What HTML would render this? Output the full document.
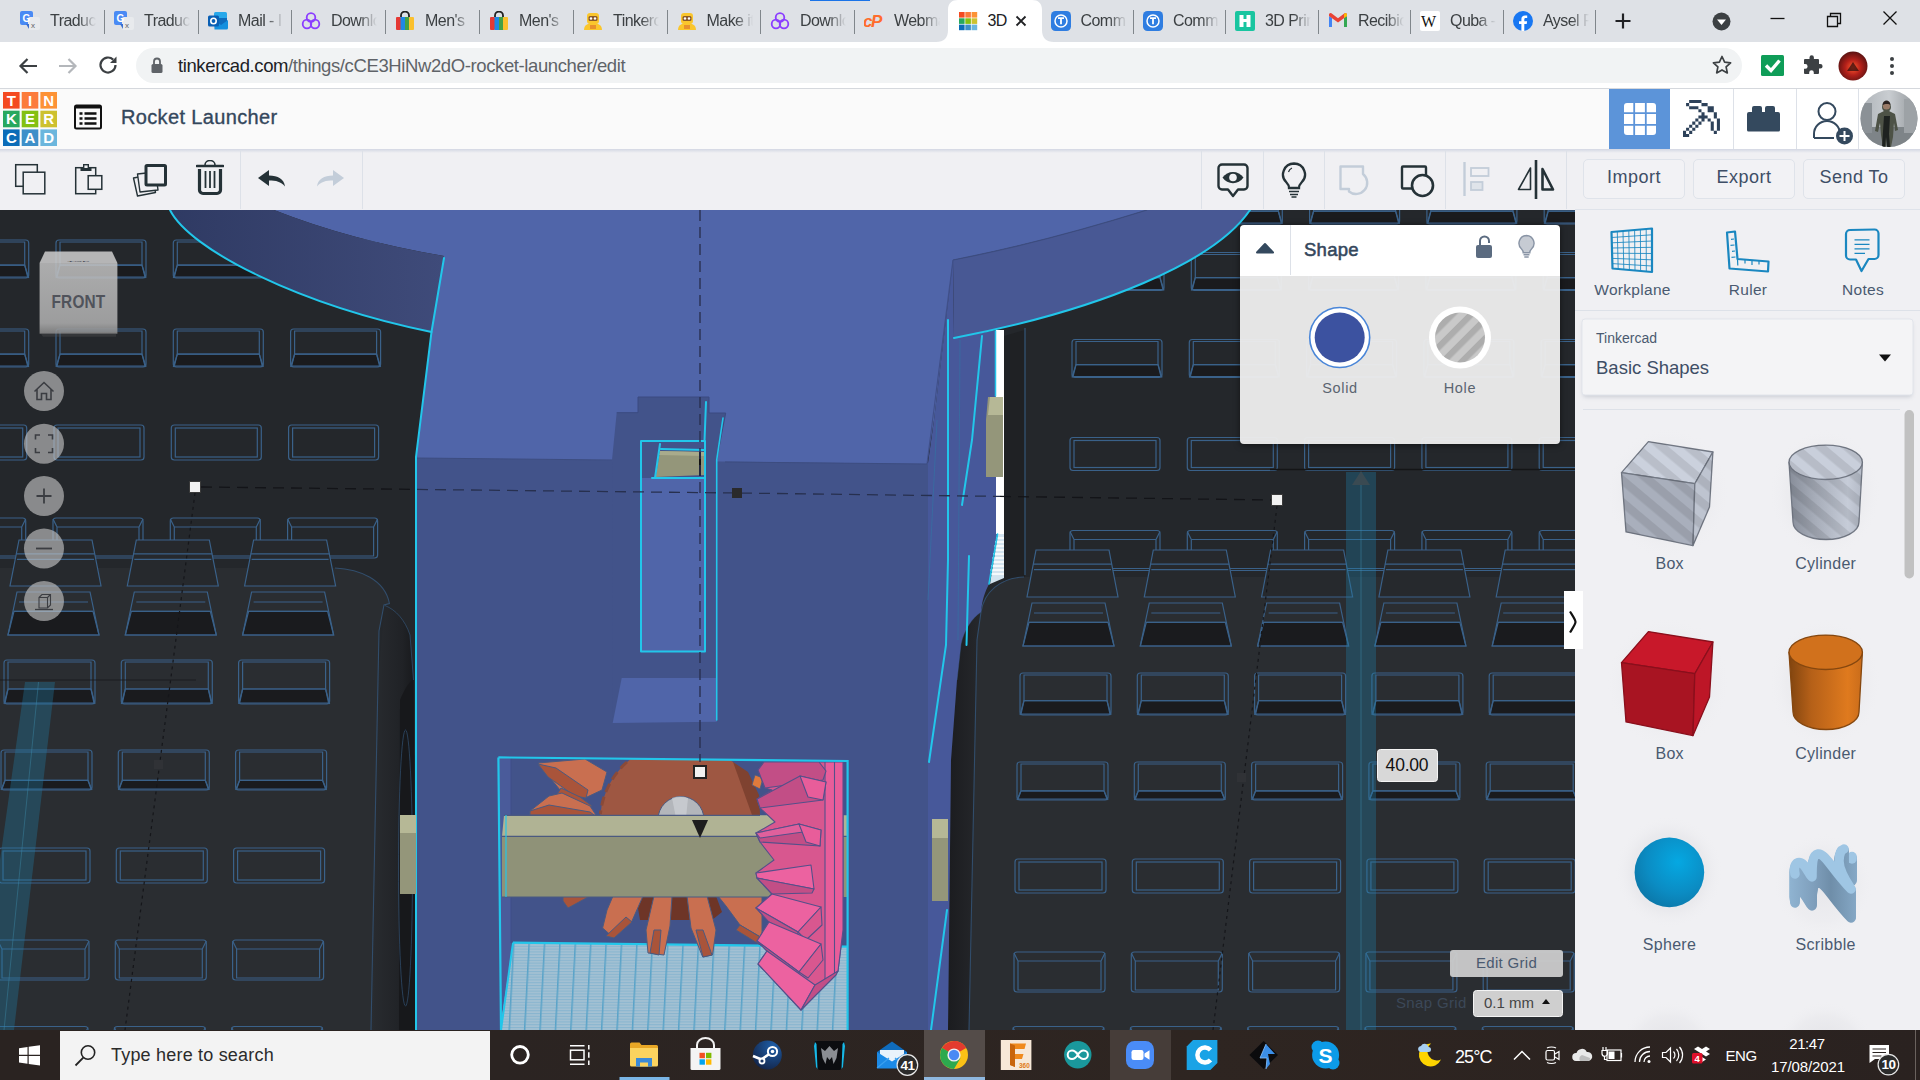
<!DOCTYPE html>
<html lang="en">
<head>
<meta charset="utf-8">
<title>3D design Rocket Launcher | Tinkercad</title>
<style>
*{box-sizing:border-box;margin:0;padding:0}
html,body{width:1920px;height:1080px;overflow:hidden;background:#fff;font-family:"Liberation Sans",sans-serif}
.abs{position:absolute}
#tabs{position:absolute;left:0;top:0;width:1920px;height:42px;background:#dee1e6;overflow:hidden}
.tab{position:absolute;top:0;height:42px;font-size:16px;letter-spacing:-.55px;color:#3c4043;line-height:41px;white-space:nowrap;overflow:hidden}
.sep{position:absolute;top:10px;width:1px;height:24px;background:#80868b}
#addr{position:absolute;left:0;top:42px;width:1920px;height:47px;background:#fff;border-bottom:1px solid #d5d8dd}
#pill{position:absolute;left:136px;top:6px;width:1606px;height:35px;border-radius:18px;background:#f1f3f4}
#url{position:absolute;left:42px;top:0;line-height:35px;font-size:18.5px;color:#5f6368;letter-spacing:-0.39px;white-space:nowrap}
#url b{font-weight:normal;color:#202124}
#hdr{position:absolute;left:0;top:89px;width:1920px;height:60px;background:#fafafa}
#hdrshadow{position:absolute;left:0;top:149px;width:1920px;height:4px;background:linear-gradient(#d3d7e3,#f0f0f3)}
#tb{position:absolute;left:0;top:149px;width:1920px;height:61px;background:#f0f0f3}
.vsep{position:absolute;top:150px;width:1px;height:59px;background:#dde1e8}
.btn{position:absolute;top:159px;height:40px;border:1px solid #dfe3ea;border-radius:5px;background:#f2f2f5;color:#3e4e66;font-size:18px;text-align:center;line-height:34px;letter-spacing:.5px}
#title{position:absolute;left:121px;top:104px;font-size:20px;color:#34475c;-webkit-text-stroke:.35px #34475c;letter-spacing:.35px;line-height:26px;white-space:nowrap}
#vp{position:absolute;left:0;top:210px;width:1575px;height:820px;background:#25282c;overflow:hidden}
#side{position:absolute;left:1575px;top:209px;width:345px;height:821px;background:#f0f0f3;border-top:1px solid #dfe3ea;overflow:hidden}
.lbl{position:absolute;font-size:15.5px;color:#4a5a70;text-align:center;width:140px;letter-spacing:.5px;white-space:nowrap}
#task{position:absolute;left:0;top:1030px;width:1920px;height:50px;background:#2a2321;overflow:hidden}
#search{position:absolute;left:60px;top:1px;width:430px;height:49px;background:#f3f3f3}
#search span{position:absolute;left:51px;top:0;line-height:48px;font-size:18px;color:#2b2b2b;white-space:nowrap;letter-spacing:.2px}
.tray{position:absolute;color:#fff;font-size:15px;white-space:nowrap}
</style>
</head>
<body>
<!-- ===== Chrome tab strip ===== -->
<div id="tabs"><svg class="abs" style="left:936px;top:0" width="118" height="42" viewBox="0 0 118 42"><path d="M0,42C8,42 12,38 12,30V10C12,3 16,0 22,0H96C102,0 106,3 106,10V30C106,38 110,42 118,42Z" fill="#fff"/></svg>
<svg class="abs" style="left:20.0px;top:11px" width="20" height="20" viewBox="0 0 20 20"><rect x="0" y="0" width="13" height="14" rx="2" fill="#4a8af4"/><rect x="8" y="6" width="12" height="13" rx="2" fill="#e8eaed"/><path d="M6,13l3,5v-5z" fill="#3a6fd0"/><text x="2.500" y="11" font-size="10" font-weight="bold" fill="#fff" font-family="Liberation Sans,sans-serif">G</text><text x="11" y="17" font-size="8" fill="#5f6368" font-family="Liberation Sans,sans-serif">x</text></svg>
<div class="tab" style="left:50.0px;width:47px;color:#3c4043;-webkit-mask-image:linear-gradient(90deg,#000 60%,transparent 98%);mask-image:linear-gradient(90deg,#000 60%,transparent 98%);">Traduc</div>
<div class="sep" style="left:104.0px"></div>
<svg class="abs" style="left:114.0px;top:11px" width="20" height="20" viewBox="0 0 20 20"><rect x="0" y="0" width="13" height="14" rx="2" fill="#4a8af4"/><rect x="8" y="6" width="12" height="13" rx="2" fill="#e8eaed"/><path d="M6,13l3,5v-5z" fill="#3a6fd0"/><text x="2.500" y="11" font-size="10" font-weight="bold" fill="#fff" font-family="Liberation Sans,sans-serif">G</text><text x="11" y="17" font-size="8" fill="#5f6368" font-family="Liberation Sans,sans-serif">x</text></svg>
<div class="tab" style="left:144.0px;width:47px;color:#3c4043;-webkit-mask-image:linear-gradient(90deg,#000 60%,transparent 98%);mask-image:linear-gradient(90deg,#000 60%,transparent 98%);">Traduc</div>
<div class="sep" style="left:198.0px"></div>
<svg class="abs" style="left:208.0px;top:11px" width="20" height="20" viewBox="0 0 20 20"><rect x="6" y="1" width="13" height="13" rx="1.500" fill="#28a8ea"/><rect x="6" y="7" width="13" height="7" fill="#0f6cbd"/><path d="M6,9l7,5l7,-5v8a1.500,1.500 0 0 1 -1.500,1.500h-12z" fill="#1490df"/><rect x="0" y="4.500" width="11" height="11" rx="1.500" fill="#0a5fb4"/><circle cx="5.500" cy="10" r="2.700" fill="none" stroke="#fff" stroke-width="1.600"/></svg>
<div class="tab" style="left:238.0px;width:47px;color:#3c4043;-webkit-mask-image:linear-gradient(90deg,#000 60%,transparent 98%);mask-image:linear-gradient(90deg,#000 60%,transparent 98%);">Mail - I</div>
<div class="sep" style="left:291.0px"></div>
<svg class="abs" style="left:301.0px;top:11px" width="20" height="20" viewBox="0 0 20 20"><g fill="none" stroke="#8b3dff" stroke-width="1.800"><circle cx="10" cy="6.500" r="4.300"/><circle cx="6" cy="13" r="4.300"/><circle cx="14" cy="13" r="4.300"/></g></svg>
<div class="tab" style="left:331.0px;width:47px;color:#3c4043;-webkit-mask-image:linear-gradient(90deg,#000 60%,transparent 98%);mask-image:linear-gradient(90deg,#000 60%,transparent 98%);">Downlo</div>
<div class="sep" style="left:385.0px"></div>
<svg class="abs" style="left:395.0px;top:11px" width="20" height="20" viewBox="0 0 20 20"><path d="M6,6V4.500a4,4 0 0 1 8,0V6" fill="none" stroke="#222" stroke-width="1.800"/><rect x="1" y="6" width="5" height="13" rx="1" fill="#e53935"/><rect x="5.500" y="6" width="4.500" height="13" fill="#1e88e5"/><rect x="10" y="6" width="4.500" height="13" fill="#43a047"/><rect x="14" y="6" width="5" height="13" rx="1" fill="#fbc02d"/></svg>
<div class="tab" style="left:425.0px;width:47px;color:#3c4043;-webkit-mask-image:linear-gradient(90deg,#000 60%,transparent 98%);mask-image:linear-gradient(90deg,#000 60%,transparent 98%);">Men's</div>
<div class="sep" style="left:479.0px"></div>
<svg class="abs" style="left:489.0px;top:11px" width="20" height="20" viewBox="0 0 20 20"><path d="M6,6V4.500a4,4 0 0 1 8,0V6" fill="none" stroke="#222" stroke-width="1.800"/><rect x="1" y="6" width="5" height="13" rx="1" fill="#e53935"/><rect x="5.500" y="6" width="4.500" height="13" fill="#1e88e5"/><rect x="10" y="6" width="4.500" height="13" fill="#43a047"/><rect x="14" y="6" width="5" height="13" rx="1" fill="#fbc02d"/></svg>
<div class="tab" style="left:519.0px;width:47px;color:#3c4043;-webkit-mask-image:linear-gradient(90deg,#000 60%,transparent 98%);mask-image:linear-gradient(90deg,#000 60%,transparent 98%);">Men's</div>
<div class="sep" style="left:573.0px"></div>
<svg class="abs" style="left:583.0px;top:11px" width="20" height="20" viewBox="0 0 20 20"><path d="M1,19c0,-5 4,-7 9,-7s9,2 9,7z" fill="#fac62d"/><rect x="4" y="2" width="12" height="11" rx="3" fill="#fac62d"/><rect x="5.500" y="5" width="9" height="5" rx="1.500" fill="#8a5a2b"/><circle cx="8" cy="7.500" r="1.200" fill="#fff"/><circle cx="12" cy="7.500" r="1.200" fill="#fff"/><rect x="7" y="14" width="6" height="4" fill="#e8912d"/></svg>
<div class="tab" style="left:613.0px;width:47px;color:#3c4043;-webkit-mask-image:linear-gradient(90deg,#000 60%,transparent 98%);mask-image:linear-gradient(90deg,#000 60%,transparent 98%);">Tinkerc</div>
<div class="sep" style="left:666.5px"></div>
<svg class="abs" style="left:676.5px;top:11px" width="20" height="20" viewBox="0 0 20 20"><path d="M1,19c0,-5 4,-7 9,-7s9,2 9,7z" fill="#fac62d"/><rect x="4" y="2" width="12" height="11" rx="3" fill="#fac62d"/><rect x="5.500" y="5" width="9" height="5" rx="1.500" fill="#8a5a2b"/><circle cx="8" cy="7.500" r="1.200" fill="#fff"/><circle cx="12" cy="7.500" r="1.200" fill="#fff"/><rect x="7" y="14" width="6" height="4" fill="#e8912d"/></svg>
<div class="tab" style="left:706.5px;width:47px;color:#3c4043;-webkit-mask-image:linear-gradient(90deg,#000 60%,transparent 98%);mask-image:linear-gradient(90deg,#000 60%,transparent 98%);">Make it</div>
<div class="sep" style="left:760.0px"></div>
<svg class="abs" style="left:770.0px;top:11px" width="20" height="20" viewBox="0 0 20 20"><g fill="none" stroke="#8b3dff" stroke-width="1.800"><circle cx="10" cy="6.500" r="4.300"/><circle cx="6" cy="13" r="4.300"/><circle cx="14" cy="13" r="4.300"/></g></svg>
<div class="tab" style="left:800.0px;width:47px;color:#3c4043;-webkit-mask-image:linear-gradient(90deg,#000 60%,transparent 98%);mask-image:linear-gradient(90deg,#000 60%,transparent 98%);">Downlo</div>
<div class="sep" style="left:854.0px"></div>
<svg class="abs" style="left:864.0px;top:11px" width="20" height="20" viewBox="0 0 20 20"><text x="-1" y="16" font-size="17" font-weight="bold" font-style="italic" fill="#ff6c2c" font-family="Liberation Sans,sans-serif" letter-spacing="-1.500">cP</text></svg>
<div class="tab" style="left:894.0px;width:47px;color:#3c4043;-webkit-mask-image:linear-gradient(90deg,#000 60%,transparent 98%);mask-image:linear-gradient(90deg,#000 60%,transparent 98%);">Webma</div>
<svg class="abs" style="left:957.5px;top:11px" width="20" height="20" viewBox="0 0 20 20"><rect x="1.0" y="1.0" width="5.600" height="5.600" fill="#f44a21"/><rect x="7.3" y="1.0" width="5.600" height="5.600" fill="#fc7b3b"/><rect x="13.6" y="1.0" width="5.600" height="5.600" fill="#fd9235"/><rect x="1.0" y="7.3" width="5.600" height="5.600" fill="#27a85f"/><rect x="7.3" y="7.3" width="5.600" height="5.600" fill="#84c012"/><rect x="13.6" y="7.3" width="5.600" height="5.600" fill="#cdc12f"/><rect x="1.0" y="13.6" width="5.600" height="5.600" fill="#0b6cb8"/><rect x="7.3" y="13.6" width="5.600" height="5.600" fill="#3d8fc9"/><rect x="13.6" y="13.6" width="5.600" height="5.600" fill="#6bb6dd"/></svg>
<div class="tab" style="left:987.5px;width:30px;color:#202124;">3D</div>
<svg class="abs" style="left:1050.5px;top:11px" width="20" height="20" viewBox="0 0 20 20"><rect x="0" y="0" width="20" height="20" rx="4.500" fill="#2f7de1"/><circle cx="10" cy="10" r="6" fill="none" stroke="#fff" stroke-width="1.500"/><path d="M7,7.200h6M10,7.200v6" stroke="#fff" stroke-width="1.800" fill="none"/></svg>
<div class="tab" style="left:1080.5px;width:47px;color:#3c4043;-webkit-mask-image:linear-gradient(90deg,#000 60%,transparent 98%);mask-image:linear-gradient(90deg,#000 60%,transparent 98%);">Comm</div>
<div class="sep" style="left:1133.0px"></div>
<svg class="abs" style="left:1143.0px;top:11px" width="20" height="20" viewBox="0 0 20 20"><rect x="0" y="0" width="20" height="20" rx="4.500" fill="#2f7de1"/><circle cx="10" cy="10" r="6" fill="none" stroke="#fff" stroke-width="1.500"/><path d="M7,7.200h6M10,7.200v6" stroke="#fff" stroke-width="1.800" fill="none"/></svg>
<div class="tab" style="left:1173.0px;width:47px;color:#3c4043;-webkit-mask-image:linear-gradient(90deg,#000 60%,transparent 98%);mask-image:linear-gradient(90deg,#000 60%,transparent 98%);">Comm</div>
<div class="sep" style="left:1225.0px"></div>
<svg class="abs" style="left:1235.0px;top:11px" width="20" height="20" viewBox="0 0 20 20"><rect x="0" y="0" width="20" height="20" rx="2" fill="#19c5a0"/><path d="M4.500,4v12h4v-5h3v5h4V4h-4v4h-3V4z" fill="#fff"/></svg>
<div class="tab" style="left:1265.0px;width:47px;color:#3c4043;-webkit-mask-image:linear-gradient(90deg,#000 60%,transparent 98%);mask-image:linear-gradient(90deg,#000 60%,transparent 98%);">3D Prin</div>
<div class="sep" style="left:1318.0px"></div>
<svg class="abs" style="left:1328.0px;top:11px" width="20" height="20" viewBox="0 0 20 20"><path d="M1,16V5l3,2v9z" fill="#4285f4"/><path d="M19,16V5l-3,2v9z" fill="#34a853"/><path d="M1,5l9,6.500L19,5V3.500a1.500,1.500 0 0 0 -2.400,-1.200L10,7.300L3.400,2.300A1.500,1.500 0 0 0 1,3.500z" fill="#ea4335"/><path d="M16,7l3,-2v-1.500a1.500,1.500 0 0 0 -3,0z" fill="#fbbc04"/></svg>
<div class="tab" style="left:1358.0px;width:47px;color:#3c4043;-webkit-mask-image:linear-gradient(90deg,#000 60%,transparent 98%);mask-image:linear-gradient(90deg,#000 60%,transparent 98%);">Recibic</div>
<div class="sep" style="left:1410.0px"></div>
<svg class="abs" style="left:1420.0px;top:11px" width="20" height="20" viewBox="0 0 20 20"><rect x="0" y="0" width="20" height="20" rx="2" fill="#fff"/><text x="1" y="16" font-size="16" fill="#111" font-family="Liberation Serif,serif">W</text></svg>
<div class="tab" style="left:1450.0px;width:47px;color:#3c4043;-webkit-mask-image:linear-gradient(90deg,#000 60%,transparent 98%);mask-image:linear-gradient(90deg,#000 60%,transparent 98%);">Quba -</div>
<div class="sep" style="left:1503.0px"></div>
<svg class="abs" style="left:1513.0px;top:11px" width="20" height="20" viewBox="0 0 20 20"><circle cx="10" cy="10" r="10" fill="#1877f2"/><path d="M11.300,20v-7h2.400l.4,-2.800h-2.800V8.400c0,-.8 .3,-1.400 1.500,-1.400h1.400V4.500c-.3,0 -1.200,-.1 -2.200,-.1c-2.200,0 -3.600,1.300 -3.600,3.700v2.100H6v2.800h2.400v7z" fill="#fff"/></svg>
<div class="tab" style="left:1543.0px;width:47px;color:#3c4043;-webkit-mask-image:linear-gradient(90deg,#000 60%,transparent 98%);mask-image:linear-gradient(90deg,#000 60%,transparent 98%);">Aysel F</div>
<div class="sep" style="left:1595.0px"></div>
<svg class="abs" style="left:1014px;top:14px" width="14" height="14" viewBox="0 0 14 14"><path d="M2.500,2.500L11.500,11.500M11.500,2.500L2.500,11.500" stroke="#202124" stroke-width="1.800"/></svg>
<svg class="abs" style="left:1614px;top:12px" width="18" height="18" viewBox="0 0 18 18"><path d="M9,1.500V16.500M1.500,9H16.500" stroke="#202124" stroke-width="2.200"/></svg>
<svg class="abs" style="left:1712px;top:12px" width="19" height="19" viewBox="0 0 19 19"><circle cx="9.500" cy="9.500" r="9" fill="#3c4043"/><path d="M5,7.500H14L9.500,13Z" fill="#fff"/></svg>
<svg class="abs" style="left:1760px;top:0" width="160" height="42" viewBox="0 0 160 42"><path d="M10.500,18.500H24.500" stroke="#111" stroke-width="1.300"/><path d="M67.500,16.500h10v10h-10zM70.500,16.500v-3h10v10h-3" stroke="#111" stroke-width="1.300" fill="none"/><path d="M123.500,11.500L136.500,24.500M136.500,11.500L123.500,24.500" stroke="#111" stroke-width="1.300"/></svg>
<div class="abs" style="left:810px;top:0;width:60px;height:1px;background:#1a73e8"></div></div>
<!-- ===== Address bar ===== -->
<div id="addr">
  <div id="pill"><div id="url"><b>tinkercad.com</b>/things/cCE3HiNw2dO-rocket-launcher/edit</div></div>
<svg class="abs" style="left:16px;top:12px" width="24" height="24" viewBox="0 0 24 24"><path d="M21,12H4.500M11.500,5L4.500,12L11.500,19" stroke="#3c4043" stroke-width="2.200" fill="none"/></svg>
<svg class="abs" style="left:56px;top:12px" width="24" height="24" viewBox="0 0 24 24"><path d="M3,12H19.500M12.500,5L19.500,12L12.500,19" stroke="#b4b7bb" stroke-width="2.200" fill="none"/></svg>
<svg class="abs" style="left:96px;top:11px" width="24" height="24" viewBox="0 0 24 24"><path d="M19.500,12a7.500,7.500 0 1 1 -2.300,-5.400" stroke="#3c4043" stroke-width="2.200" fill="none"/><path d="M20.500,3.500V10H14Z" fill="#3c4043"/></svg>
<svg class="abs" style="left:150px;top:15px" width="14" height="17" viewBox="0 0 14 17"><rect x="1.500" y="7" width="11" height="9" rx="1.500" fill="#5f6368"/><path d="M4,7V4.500a3,3 0 0 1 6,0V7" stroke="#5f6368" stroke-width="1.800" fill="none"/></svg>
<svg class="abs" style="left:1711px;top:12px" width="22" height="22" viewBox="0 0 22 22"><path d="M11,2.500l2.600,5.600l6,.7l-4.500,4.100l1.200,6l-5.300,-3l-5.300,3l1.200,-6l-4.500,-4.100l6,-.7z" stroke="#3c4043" stroke-width="1.700" fill="none" stroke-linejoin="round"/></svg>
<svg class="abs" style="left:1761px;top:13px" width="23" height="21" viewBox="0 0 23 21"><rect width="23" height="21" rx="1.500" fill="#0f9d58"/><path d="M5,10.500l5,5l8.500,-10" stroke="#fff" stroke-width="3.400" fill="none"/></svg>
<svg class="abs" style="left:1801px;top:12px" width="22" height="22" viewBox="0 0 22 22"><path d="M8.500,3.500a2.200,2.200 0 0 1 4.400,0V5H17a1,1 0 0 1 1,1v4h1.300a2.300,2.300 0 0 1 0,4.600H18V19a1,1 0 0 1 -1,1h-4.200v-1.400a2.300,2.300 0 0 0 -4.600,0V20H4a1,1 0 0 1 -1,-1v-4.300h1.300a2.300,2.300 0 0 0 0,-4.600H3V6a1,1 0 0 1 1,-1h4.500z" fill="#3c4043"/></svg>
<svg class="abs" style="left:1838px;top:9px" width="30" height="30" viewBox="0 0 30 30"><defs><radialGradient id="av1" cx=".5" cy=".55" r=".6"><stop offset="0" stop-color="#ff5a2e"/><stop offset=".45" stop-color="#b3201a"/><stop offset="1" stop-color="#4a1010"/></radialGradient></defs><circle cx="15" cy="15" r="14.500" fill="url(#av1)"/><path d="M9,20l6,-9l6,9z" fill="#2a0c0c" opacity=".7"/></svg>
<svg class="abs" style="left:1888px;top:14px" width="8" height="20" viewBox="0 0 8 20"><circle cx="4" cy="3" r="2" fill="#3c4043"/><circle cx="4" cy="10" r="2" fill="#3c4043"/><circle cx="4" cy="17" r="2" fill="#3c4043"/></svg>
</div>
<!-- ===== Tinkercad header ===== -->
<div id="hdr"></div>
<div id="tb"></div>
<div id="hdrshadow"></div>
<div id="title">Rocket Launcher</div>
<!-- Tinkercad logo -->
<svg class="abs" style="left:3px;top:92px" width="54" height="54" viewBox="0 0 54 54">
<g font-family="Liberation Sans,sans-serif" font-weight="bold" font-size="15" fill="#fff" text-anchor="middle">
<rect x="0" y="0" width="16.600" height="16.600" fill="#f44a21"/><text x="8.300" y="13.700">T</text>
<rect x="18.700" y="0" width="16.600" height="16.600" fill="#fc7b3b"/><text x="27" y="13.700">I</text>
<rect x="37.400" y="0" width="16.600" height="16.600" fill="#fd9235"/><text x="45.700" y="13.700">N</text>
<rect x="0" y="18.700" width="16.600" height="16.600" fill="#27a85f"/><text x="8.300" y="32.400">K</text>
<rect x="18.700" y="18.700" width="16.600" height="16.600" fill="#84c012"/><text x="27" y="32.400">E</text>
<rect x="37.400" y="18.700" width="16.600" height="16.600" fill="#cdc12f"/><text x="45.700" y="32.400">R</text>
<rect x="0" y="37.400" width="16.600" height="16.600" fill="#0b6cb8"/><text x="8.300" y="51.100">C</text>
<rect x="18.700" y="37.400" width="16.600" height="16.600" fill="#3d8fc9"/><text x="27" y="51.100">A</text>
<rect x="37.400" y="37.400" width="16.600" height="16.600" fill="#6bb6dd"/><text x="45.700" y="51.100">D</text>
</g></svg>
<!-- list icon -->
<svg class="abs" style="left:74px;top:104px" width="28" height="26" viewBox="0 0 28 26">
<rect x="1" y="1.500" width="26" height="23" rx="1.500" fill="none" stroke="#111" stroke-width="2"/>
<rect x="1" y="1" width="26" height="3.500" fill="#111"/>
<path d="M5.500,9.500h3M10.500,9.500h12M5.500,14.500h3M10.500,14.500h12M5.500,19.500h3M10.500,19.500h12" stroke="#111" stroke-width="2.400"/>
</svg>
<!-- right header buttons -->
<div class="abs" style="left:1670px;top:89px;width:250px;height:60px;background:#fff"></div>
<div class="abs" style="left:1609px;top:89px;width:61px;height:60px;background:#5c94d9"></div>
<svg class="abs" style="left:1623.500px;top:103px" width="32" height="32" viewBox="0 0 32 32">
<rect x="0" y="0" width="32" height="32" rx="3" fill="#fff"/>
<path d="M10.200,0V32M21.800,0V32M0,10.200H32M0,21.800H32" stroke="#5c94d9" stroke-width="1.800"/>
</svg>
<div class="abs" style="left:1733px;top:89px;width:1px;height:60px;background:#dde1e8"></div>
<div class="abs" style="left:1795.500px;top:89px;width:1px;height:60px;background:#dde1e8"></div>
<div class="abs" style="left:1858px;top:89px;width:1px;height:60px;background:#dde1e8"></div>
<!-- pickaxe (pixel style) -->
<svg class="abs" style="left:1683.400px;top:100px" width="37" height="37" viewBox="0 0 37 37"><path d="M6.16,0.00h3.08v3.08h-3.08zM9.24,0.00h3.08v3.08h-3.08zM12.32,0.00h3.08v3.08h-3.08zM15.40,0.00h3.08v3.08h-3.08zM3.08,3.08h3.08v3.08h-3.08zM18.48,3.08h3.08v3.08h-3.08zM21.56,3.08h3.08v3.08h-3.08zM6.16,6.16h3.08v3.08h-3.08zM9.24,6.16h3.08v3.08h-3.08zM12.32,6.16h3.08v3.08h-3.08zM24.64,6.16h3.08v3.08h-3.08zM27.72,6.16h3.08v3.08h-3.08zM15.40,9.24h3.08v3.08h-3.08zM24.64,9.24h3.08v3.08h-3.08zM27.72,9.24h3.08v3.08h-3.08zM18.48,12.32h3.08v3.08h-3.08zM30.80,12.32h3.08v3.08h-3.08zM15.40,15.40h3.08v3.08h-3.08zM18.48,15.40h3.08v3.08h-3.08zM21.56,15.40h3.08v3.08h-3.08zM30.80,15.40h3.08v3.08h-3.08zM12.32,18.48h3.08v3.08h-3.08zM18.48,18.48h3.08v3.08h-3.08zM24.64,18.48h3.08v3.08h-3.08zM33.88,18.48h3.08v3.08h-3.08zM9.24,21.56h3.08v3.08h-3.08zM15.40,21.56h3.08v3.08h-3.08zM27.72,21.56h3.08v3.08h-3.08zM33.88,21.56h3.08v3.08h-3.08zM6.16,24.64h3.08v3.08h-3.08zM12.32,24.64h3.08v3.08h-3.08zM27.72,24.64h3.08v3.08h-3.08zM33.88,24.64h3.08v3.08h-3.08zM3.08,27.72h3.08v3.08h-3.08zM9.24,27.72h3.08v3.08h-3.08zM27.72,27.72h3.08v3.08h-3.08zM33.88,27.72h3.08v3.08h-3.08zM0.00,30.80h3.08v3.08h-3.08zM6.16,30.80h3.08v3.08h-3.08zM30.80,30.80h3.08v3.08h-3.08zM0.00,33.88h3.08v3.08h-3.08zM3.08,33.88h3.08v3.08h-3.08z" fill="#2d4159"/></svg>
<!-- lego brick -->
<svg class="abs" style="left:1747px;top:106px" width="33" height="26" viewBox="0 0 33 26">
<path d="M0,8a2,2 0 0 1 2,-2h3V2a2,2 0 0 1 2,-2h6a2,2 0 0 1 2,2v4h3V2a2,2 0 0 1 2,-2h6a2,2 0 0 1 2,2v4h3a2,2 0 0 1 2,2V24a1.500,1.500 0 0 1 -1.500,1.500h-30A1.500,1.500 0 0 1 0,24z" fill="#34495e"/>
</svg>
<!-- user plus -->
<svg class="abs" style="left:1812px;top:101px" width="44" height="46" viewBox="0 0 44 46">
<circle cx="15" cy="10.500" r="8.500" fill="none" stroke="#34495e" stroke-width="2"/>
<path d="M2,37V33a13,13 0 0 1 26,0" fill="none" stroke="#34495e" stroke-width="2"/>
<path d="M2,37H22" stroke="#34495e" stroke-width="2"/>
<circle cx="32.500" cy="35" r="8.500" fill="#34495e"/>
<path d="M32.500,30V40M27.500,35H37.500" stroke="#fff" stroke-width="2"/>
</svg>
<!-- avatar -->
<svg class="abs" style="left:1860px;top:89px" width="58" height="60" viewBox="0 0 58 60">
<defs><clipPath id="avc"><circle cx="29" cy="29.500" r="28.500"/></clipPath>
<linearGradient id="avbg" x1="0" x2="1"><stop offset="0" stop-color="#aeb3b8"/><stop offset=".5" stop-color="#c9cdd1"/><stop offset="1" stop-color="#8f9498"/></linearGradient></defs>
<g clip-path="url(#avc)">
<rect width="58" height="60" fill="url(#avbg)"/>
<rect x="0" y="38" width="58" height="22" fill="#7e8488"/>
<rect x="0" y="14" width="12" height="30" fill="#8b9196"/>
<rect x="44" y="10" width="14" height="34" fill="#9da2a6"/>
<path d="M22,18c0,-3 2,-5 4.500,-5s4.500,2 4.500,5c0,2 -1,3.500 -2,4l6,3l3,16l-3,1l-1,-8l-1,14l-2,10h-3l-1,-12l-1,12h-3l-2,-12l-1,-12l-2,9l-3,-1l3,-17l6,-3c-1,-.5 -2,-2 -2,-4z" fill="#4d5246"/>
<path d="M24,27h6l-1,18l1,13h-3l-1,-10l-1,10h-3z" fill="#1e2220"/>
<circle cx="26.500" cy="17" r="3.600" fill="#9a7b68"/>
<path d="M22.500,16c0,-3 2,-4.500 4,-4.500s4,1.500 4,4.500c-1,-1.500 -6,-1.500 -8,0z" fill="#2b2220"/>
</g></svg>

<!-- toolbar separators -->
<div class="vsep" style="left:240px"></div><div class="vsep" style="left:362px"></div>
<div class="vsep" style="left:1201px"></div><div class="vsep" style="left:1263px"></div><div class="vsep" style="left:1324px"></div><div class="vsep" style="left:1445px"></div><div class="vsep" style="left:1566px"></div>
<!-- copy -->
<svg class="abs" style="left:14px;top:163px" width="32" height="32" viewBox="0 0 32 32"><g fill="#f0f0f3" stroke="#253237" stroke-width="1.500"><rect x="1.700" y="1.700" width="21.600" height="21.600"/><rect x="9.200" y="9.200" width="21.600" height="21.600"/></g></svg>
<!-- paste -->
<svg class="abs" style="left:74px;top:163px" width="30" height="32" viewBox="0 0 30 32"><g fill="#f0f0f3" stroke="#253237" stroke-width="1.500"><rect x="1.700" y="4.700" width="20" height="26"/><rect x="14.200" y="12.700" width="13.600" height="13.600"/></g><path d="M6.500,4.500h11v3.500h-11z" fill="#253237"/><rect x="9.700" y="1.700" width="4.600" height="4" fill="#f0f0f3" stroke="#253237" stroke-width="1.400"/></svg>
<!-- duplicate -->
<svg class="abs" style="left:132px;top:163px" width="36" height="35" viewBox="0 0 36 35"><g fill="#f0f0f3" stroke="#253237" stroke-width="1.400" stroke-linejoin="round"><path d="M1.500,15l18,-3.500l4,18l-18,3.500z"/><path d="M5.500,11l18,-2l2.500,18l-18,2z"/></g><rect x="14" y="2.500" width="19.500" height="19.500" rx="1" fill="#f0f0f3" stroke="#253237" stroke-width="3"/></svg>
<!-- trash -->
<svg class="abs" style="left:196px;top:160px" width="28" height="36" viewBox="0 0 28 36"><path d="M9,5a5,4.500 0 0 1 10,0" fill="none" stroke="#253237" stroke-width="1.600"/><path d="M1,6h26" stroke="#253237" stroke-width="2.600" stroke-linecap="round"/><path d="M3.500,9V30a3.500,3.500 0 0 0 3.500,3.500h14a3.500,3.500 0 0 0 3.500,-3.500V9" fill="none" stroke="#253237" stroke-width="3.200"/><path d="M9.500,11V28M14,11V28M18.500,11V28" stroke="#253237" stroke-width="1.800"/></svg>
<!-- undo -->
<svg class="abs" style="left:257px;top:169px" width="29" height="19" viewBox="0 0 29 19"><path d="M1,9L12,1V6.500C21,6.500 27,10 28,17.500C24,12.500 19,11.500 12,11.500V17Z" fill="#253237"/></svg>
<!-- redo -->
<svg class="abs" style="left:316px;top:169px" width="29" height="19" viewBox="0 0 29 19"><path d="M28,9L17,1V6.500C8,6.500 2,10 1,17.500C5,12.500 10,11.500 17,11.500V17Z" fill="#c3cdd9"/></svg>
<!-- eye / view -->
<svg class="abs" style="left:1217px;top:163px" width="32" height="36" viewBox="0 0 32 36"><path d="M5,1.500h22a3.500,3.500 0 0 1 3.500,3.500v18a3.500,3.500 0 0 1 -3.500,3.500h-6l-5,6.500l-5,-6.500h-6a3.500,3.500 0 0 1 -3.500,-3.500v-18a3.500,3.500 0 0 1 3.500,-3.500z" fill="none" stroke="#253237" stroke-width="2.400" stroke-linejoin="round"/><path d="M5.500,14.500c5,-7.500 16,-7.500 21,0c-5,7.500 -16,7.500 -21,0z" fill="#253237"/><circle cx="16" cy="14.500" r="3.800" fill="#f0f0f3"/></svg>
<!-- bulb -->
<svg class="abs" style="left:1281px;top:162px" width="26" height="36" viewBox="0 0 26 36"><path d="M13,1.500a11,11 0 0 1 7.500,19c-1.800,1.800 -2.500,3.500 -2.500,5.500h-10c0,-2 -.7,-3.700 -2.500,-5.500a11,11 0 0 1 7.500,-19z" fill="none" stroke="#253237" stroke-width="2.300"/><path d="M8,29.500h10M9,32.500h8M10.500,35h5" stroke="#253237" stroke-width="1.600"/><path d="M7.500,10a6,6 0 0 1 3.500,-4" stroke="#253237" stroke-width="1.200" fill="none"/></svg>
<!-- group (disabled) -->
<svg class="abs" style="left:1339px;top:164px" width="34" height="34" viewBox="0 0 34 34"><path d="M1.500,2.500h22.500v7.500a11,11 0 1 1 -14,17.500v-2.500H1.500z" fill="none" stroke="#c3cdd9" stroke-width="2.400" stroke-linejoin="round"/></svg>
<!-- ungroup -->
<svg class="abs" style="left:1400px;top:164px" width="35" height="34" viewBox="0 0 35 34"><rect x="2" y="2.500" width="24" height="22" rx="1" fill="none" stroke="#253237" stroke-width="2.400"/><circle cx="22.500" cy="21.500" r="10.500" fill="#f0f0f3" stroke="#253237" stroke-width="2.600"/></svg>
<!-- align (disabled) -->
<svg class="abs" style="left:1463px;top:162px" width="28" height="34" viewBox="0 0 28 34"><path d="M1.500,0V34" stroke="#c3cdd9" stroke-width="2.400"/><rect x="8" y="6" width="17.500" height="8" fill="none" stroke="#c3cdd9" stroke-width="1.800"/><rect x="8" y="20" width="11.500" height="8" fill="#dfe4ea" stroke="#c3cdd9" stroke-width="1.800"/></svg>
<!-- mirror -->
<svg class="abs" style="left:1516px;top:160px" width="40" height="39" viewBox="0 0 40 39"><path d="M20,0V39" stroke="#253237" stroke-width="2.600"/><path d="M14.500,8V29.500H2.500Z" fill="none" stroke="#253237" stroke-width="1.600" stroke-linejoin="round"/><path d="M26.500,9V29.500H37Z" fill="none" stroke="#253237" stroke-width="2.600" stroke-linejoin="round"/></svg>
<!-- buttons -->
<div class="btn" style="left:1583px;width:102px">Import</div>
<div class="btn" style="left:1693px;width:102px">Export</div>
<div class="btn" style="left:1803px;width:102px">Send To</div>

<!-- ===== Viewport ===== -->
<div id="vp">
<svg id="scene" class="abs" style="left:0;top:0" width="1575" height="820" viewBox="0 210 1575 820">
<defs>
<linearGradient id="gbandL" x1="0" x2="1" y1="0" y2="0"><stop offset="0" stop-color="#2f3a63"/><stop offset="1" stop-color="#3f4b7a"/></linearGradient>
<linearGradient id="gwall" x1="0" x2="0" y1="0" y2="1"><stop offset="0" stop-color="#25282c"/><stop offset="1" stop-color="#27292d"/></linearGradient>
<pattern id="floor" width="15.400" height="2.800" patternUnits="userSpaceOnUse" patternTransform="translate(513 943) skewX(-3)"><rect width="15.400" height="2.800" fill="#a4c1d3"/><rect width="15.400" height="1.100" fill="#88b5cf"/><rect width="1.500" height="2.800" fill="#5aa3c8"/></pattern>
<linearGradient id="gR2" x1="0" x2="1"><stop offset="0" stop-color="#1b1c1f"/><stop offset="1" stop-color="#26282c"/></linearGradient><linearGradient id="gL2" x1="0" x2="1"><stop offset="0" stop-color="#292c30"/><stop offset=".7" stop-color="#202226"/><stop offset="1" stop-color="#17181b"/></linearGradient>
</defs>
<rect x="0" y="210" width="1575" height="820" fill="#24272b"/>
<!-- back wall blocks (right/left, upper rows) -->
<g fill="none" stroke="#3a6189" stroke-width="1.2">
<path d="M1079.0,211.1H1161.0L1164.0,223.0H1076.0Z" fill="#1a1b1e"/><rect x="1075.0" y="186.0" width="90.0" height="38.0" rx="3"/><path d="M1079.0,188.0H1161.0V211.1H1079.0ZM1079.0,211.1L1075.0,224.0M1161.0,211.1L1165.0,224.0"/><path d="M1196.3,211.1H1278.3L1281.3,223.0H1193.3Z" fill="#1a1b1e"/><rect x="1192.3" y="186.0" width="90.0" height="38.0" rx="3"/><path d="M1196.3,188.0H1278.3V211.1H1196.3ZM1196.3,211.1L1192.3,224.0M1278.3,211.1L1282.3,224.0"/><path d="M1313.6,211.1H1395.6L1398.6,223.0H1310.6Z" fill="#1a1b1e"/><rect x="1309.6" y="186.0" width="90.0" height="38.0" rx="3"/><path d="M1313.6,188.0H1395.6V211.1H1313.6ZM1313.6,211.1L1309.6,224.0M1395.6,211.1L1399.6,224.0"/><path d="M1430.9,211.1H1512.9L1515.9,223.0H1427.9Z" fill="#1a1b1e"/><rect x="1426.9" y="186.0" width="90.0" height="38.0" rx="3"/><path d="M1430.9,188.0H1512.9V211.1H1430.9ZM1430.9,211.1L1426.9,224.0M1512.9,211.1L1516.9,224.0"/><path d="M1548.2,211.1H1630.2L1633.2,223.0H1545.2Z" fill="#1a1b1e"/><rect x="1544.2" y="186.0" width="90.0" height="38.0" rx="3"/><path d="M1548.2,188.0H1630.2V211.1H1548.2ZM1548.2,211.1L1544.2,224.0M1630.2,211.1L1634.2,224.0"/><path d="M1078.0,277.6H1160.0L1163.0,289.5H1075.0Z" fill="#1a1b1e"/><rect x="1074.0" y="252.5" width="90.0" height="38.0" rx="3"/><path d="M1078.0,254.5H1160.0V277.6H1078.0ZM1078.0,277.6L1074.0,290.5M1160.0,277.6L1164.0,290.5"/><path d="M1195.3,277.6H1277.3L1280.3,289.5H1192.3Z" fill="#1a1b1e"/><rect x="1191.3" y="252.5" width="90.0" height="38.0" rx="3"/><path d="M1195.3,254.5H1277.3V277.6H1195.3ZM1195.3,277.6L1191.3,290.5M1277.3,277.6L1281.3,290.5"/><path d="M1312.6,277.6H1394.6L1397.6,289.5H1309.6Z" fill="#1a1b1e"/><rect x="1308.6" y="252.5" width="90.0" height="38.0" rx="3"/><path d="M1312.6,254.5H1394.6V277.6H1312.6ZM1312.6,277.6L1308.6,290.5M1394.6,277.6L1398.6,290.5"/><path d="M1429.9,277.6H1511.9L1514.9,289.5H1426.9Z" fill="#1a1b1e"/><rect x="1425.9" y="252.5" width="90.0" height="38.0" rx="3"/><path d="M1429.9,254.5H1511.9V277.6H1429.9ZM1429.9,277.6L1425.9,290.5M1511.9,277.6L1515.9,290.5"/><path d="M1547.2,277.6H1629.2L1632.2,289.5H1544.2Z" fill="#1a1b1e"/><rect x="1543.2" y="252.5" width="90.0" height="38.0" rx="3"/><path d="M1547.2,254.5H1629.2V277.6H1547.2ZM1547.2,277.6L1543.2,290.5M1629.2,277.6L1633.2,290.5"/><path d="M1076.0,364.6H1158.0L1161.0,376.5H1073.0Z" fill="#1a1b1e"/><rect x="1072.0" y="339.5" width="90.0" height="38.0" rx="3"/><path d="M1076.0,341.5H1158.0V364.6H1076.0ZM1076.0,364.6L1072.0,377.5M1158.0,364.6L1162.0,377.5"/><path d="M1193.3,364.6H1275.3L1278.3,376.5H1190.3Z" fill="#1a1b1e"/><rect x="1189.3" y="339.5" width="90.0" height="38.0" rx="3"/><path d="M1193.3,341.5H1275.3V364.6H1193.3ZM1193.3,364.6L1189.3,377.5M1275.3,364.6L1279.3,377.5"/><path d="M1310.6,364.6H1392.6L1395.6,376.5H1307.6Z" fill="#1a1b1e"/><rect x="1306.6" y="339.5" width="90.0" height="38.0" rx="3"/><path d="M1310.6,341.5H1392.6V364.6H1310.6ZM1310.6,364.6L1306.6,377.5M1392.6,364.6L1396.6,377.5"/><path d="M1427.9,364.6H1509.9L1512.9,376.5H1424.9Z" fill="#1a1b1e"/><rect x="1423.9" y="339.5" width="90.0" height="38.0" rx="3"/><path d="M1427.9,341.5H1509.9V364.6H1427.9ZM1427.9,364.6L1423.9,377.5M1509.9,364.6L1513.9,377.5"/><path d="M1545.2,364.6H1627.2L1630.2,376.5H1542.2Z" fill="#1a1b1e"/><rect x="1541.2" y="339.5" width="90.0" height="38.0" rx="3"/><path d="M1545.2,341.5H1627.2V364.6H1545.2ZM1545.2,364.6L1541.2,377.5M1627.2,364.6L1631.2,377.5"/><rect x="1070.0" y="437.5" width="90.0" height="33.0" rx="3"/><rect x="1074.0" y="440.5" width="82.0" height="27.0"/><rect x="1187.3" y="437.5" width="90.0" height="33.0" rx="3"/><rect x="1191.3" y="440.5" width="82.0" height="27.0"/><rect x="1304.6" y="437.5" width="90.0" height="33.0" rx="3"/><rect x="1308.6" y="440.5" width="82.0" height="27.0"/><rect x="1421.9" y="437.5" width="90.0" height="33.0" rx="3"/><rect x="1425.9" y="440.5" width="82.0" height="27.0"/><rect x="1539.2" y="437.5" width="90.0" height="33.0" rx="3"/><rect x="1543.2" y="440.5" width="82.0" height="27.0"/><rect x="1070.0" y="530.5" width="90.0" height="40.0" rx="3"/><path d="M1074.0,539.5H1156.0V568.5H1074.0ZM1074.0,539.5L1070.0,531.5M1156.0,539.5L1160.0,531.5"/><rect x="1187.3" y="530.5" width="90.0" height="40.0" rx="3"/><path d="M1191.3,539.5H1273.3V568.5H1191.3ZM1191.3,539.5L1187.3,531.5M1273.3,539.5L1277.3,531.5"/><rect x="1304.6" y="530.5" width="90.0" height="40.0" rx="3"/><path d="M1308.6,539.5H1390.6V568.5H1308.6ZM1308.6,539.5L1304.6,531.5M1390.6,539.5L1394.6,531.5"/><rect x="1421.9" y="530.5" width="90.0" height="40.0" rx="3"/><path d="M1425.9,539.5H1507.9V568.5H1425.9ZM1425.9,539.5L1421.9,531.5M1507.9,539.5L1511.9,531.5"/><rect x="1539.2" y="530.5" width="90.0" height="40.0" rx="3"/><path d="M1543.2,539.5H1625.2V568.5H1543.2ZM1543.2,539.5L1539.2,531.5M1625.2,539.5L1629.2,531.5"/>
</g>
<!-- thin dark strip next to body on right -->
<path d="M1004,336 L1025,330 L1025,577 L1004,590Z" fill="#1f2124"/>
<path d="M1025,328V575" stroke="#35587a" stroke-width="1.2" fill="none"/>
<path d="M1270,469.500H1575" stroke="#141517" stroke-width="1.5"/>
<!-- right rounded bodies -->
<path d="M981,612C972,618 964,630 961,644L957,680L951,760L948,1030H972L979,640Z" fill="url(#gR2)"/>
<path d="M1575,577H1024C1000,578 984,592 981,612L977,640L969,1030H1575Z" fill="#2a2d31"/>
<path d="M1024,577C1000,578 984,592 981,612L977,640L969,1030" stroke="#355a80" stroke-width="1.100" fill="none" opacity=".75"/>
<path d="M981,612C972,618 964,630 961,644L957,680" stroke="#355a80" stroke-width="1" fill="none" opacity=".5"/>
<g fill="none" stroke="#3a6189" stroke-width="1.2">
<path d="M1036.0,550.0H1109.0L1118.0,597.0H1027.0Z" fill="#26292d"/><path d="M1033.0,564.1H1112.0M1034.0,569.7H1111.0"/><path d="M1153.3,550.0H1226.3L1235.3,597.0H1144.3Z" fill="#26292d"/><path d="M1150.3,564.1H1229.3M1151.3,569.7H1228.3"/><path d="M1270.6,550.0H1343.6L1352.6,597.0H1261.6Z" fill="#26292d"/><path d="M1267.6,564.1H1346.6M1268.6,569.7H1345.6"/><path d="M1387.9,550.0H1460.9L1469.9,597.0H1378.9Z" fill="#26292d"/><path d="M1384.9,564.1H1463.9M1385.9,569.7H1462.9"/><path d="M1505.2,550.0H1578.2L1587.2,597.0H1496.2Z" fill="#26292d"/><path d="M1502.2,564.1H1581.2M1503.2,569.7H1580.2"/><path d="M1029.0,622.4H1108.0L1114.0,646.0H1023.0Z" fill="#1a1b1e"/><path d="M1032.0,603.0H1105.0L1114.0,646.0H1023.0ZM1029.0,622.4H1108.0M1034.0,613.0H1103.0"/><path d="M1146.3,622.4H1225.3L1231.3,646.0H1140.3Z" fill="#1a1b1e"/><path d="M1149.3,603.0H1222.3L1231.3,646.0H1140.3ZM1146.3,622.4H1225.3M1151.3,613.0H1220.3"/><path d="M1263.6,622.4H1342.6L1348.6,646.0H1257.6Z" fill="#1a1b1e"/><path d="M1266.6,603.0H1339.6L1348.6,646.0H1257.6ZM1263.6,622.4H1342.6M1268.6,613.0H1337.6"/><path d="M1380.9,622.4H1459.9L1465.9,646.0H1374.9Z" fill="#1a1b1e"/><path d="M1383.9,603.0H1456.9L1465.9,646.0H1374.9ZM1380.9,622.4H1459.9M1385.9,613.0H1454.9"/><path d="M1498.2,622.4H1577.2L1583.2,646.0H1492.2Z" fill="#1a1b1e"/><path d="M1501.2,603.0H1574.2L1583.2,646.0H1492.2ZM1498.2,622.4H1577.2M1503.2,613.0H1572.2"/><path d="M1024.0,700.7H1107.0L1110.0,714.0H1021.0Z" fill="#1a1b1e"/><rect x="1020.0" y="673.0" width="91.0" height="42.0" rx="3"/><path d="M1024.0,675.0H1107.0V700.7H1024.0ZM1024.0,700.7L1020.0,715.0M1107.0,700.7L1111.0,715.0"/><path d="M1141.3,700.7H1224.3L1227.3,714.0H1138.3Z" fill="#1a1b1e"/><rect x="1137.3" y="673.0" width="91.0" height="42.0" rx="3"/><path d="M1141.3,675.0H1224.3V700.7H1141.3ZM1141.3,700.7L1137.3,715.0M1224.3,700.7L1228.3,715.0"/><path d="M1258.6,700.7H1341.6L1344.6,714.0H1255.6Z" fill="#1a1b1e"/><rect x="1254.6" y="673.0" width="91.0" height="42.0" rx="3"/><path d="M1258.6,675.0H1341.6V700.7H1258.6ZM1258.6,700.7L1254.6,715.0M1341.6,700.7L1345.6,715.0"/><path d="M1375.9,700.7H1458.9L1461.9,714.0H1372.9Z" fill="#1a1b1e"/><rect x="1371.9" y="673.0" width="91.0" height="42.0" rx="3"/><path d="M1375.9,675.0H1458.9V700.7H1375.9ZM1375.9,700.7L1371.9,715.0M1458.9,700.7L1462.9,715.0"/><path d="M1493.2,700.7H1576.2L1579.2,714.0H1490.2Z" fill="#1a1b1e"/><rect x="1489.2" y="673.0" width="91.0" height="42.0" rx="3"/><path d="M1493.2,675.0H1576.2V700.7H1493.2ZM1493.2,700.7L1489.2,715.0M1576.2,700.7L1580.2,715.0"/><path d="M1021.0,790.9H1104.0L1107.0,799.0H1018.0Z" fill="#1a1b1e"/><rect x="1017.0" y="762.0" width="91.0" height="38.0" rx="3"/><path d="M1021.0,764.0H1104.0V790.9H1021.0ZM1021.0,790.9L1017.0,800.0M1104.0,790.9L1108.0,800.0"/><path d="M1138.3,790.9H1221.3L1224.3,799.0H1135.3Z" fill="#1a1b1e"/><rect x="1134.3" y="762.0" width="91.0" height="38.0" rx="3"/><path d="M1138.3,764.0H1221.3V790.9H1138.3ZM1138.3,790.9L1134.3,800.0M1221.3,790.9L1225.3,800.0"/><path d="M1255.6,790.9H1338.6L1341.6,799.0H1252.6Z" fill="#1a1b1e"/><rect x="1251.6" y="762.0" width="91.0" height="38.0" rx="3"/><path d="M1255.6,764.0H1338.6V790.9H1255.6ZM1255.6,790.9L1251.6,800.0M1338.6,790.9L1342.6,800.0"/><path d="M1372.9,790.9H1455.9L1458.9,799.0H1369.9Z" fill="#1a1b1e"/><rect x="1368.9" y="762.0" width="91.0" height="38.0" rx="3"/><path d="M1372.9,764.0H1455.9V790.9H1372.9ZM1372.9,790.9L1368.9,800.0M1455.9,790.9L1459.9,800.0"/><path d="M1490.2,790.9H1573.2L1576.2,799.0H1487.2Z" fill="#1a1b1e"/><rect x="1486.2" y="762.0" width="91.0" height="38.0" rx="3"/><path d="M1490.2,764.0H1573.2V790.9H1490.2ZM1490.2,790.9L1486.2,800.0M1573.2,790.9L1577.2,800.0"/><rect x="1015.0" y="859.0" width="91.0" height="34.0" rx="3"/><rect x="1019.0" y="862.0" width="83.0" height="28.0"/><rect x="1132.3" y="859.0" width="91.0" height="34.0" rx="3"/><rect x="1136.3" y="862.0" width="83.0" height="28.0"/><rect x="1249.6" y="859.0" width="91.0" height="34.0" rx="3"/><rect x="1253.6" y="862.0" width="83.0" height="28.0"/><rect x="1366.9" y="859.0" width="91.0" height="34.0" rx="3"/><rect x="1370.9" y="862.0" width="83.0" height="28.0"/><rect x="1484.2" y="859.0" width="91.0" height="34.0" rx="3"/><rect x="1488.2" y="862.0" width="83.0" height="28.0"/><rect x="1014.0" y="952.0" width="91.0" height="40.0" rx="3"/><path d="M1018.0,961.0H1101.0V990.0H1018.0ZM1018.0,961.0L1014.0,953.0M1101.0,961.0L1105.0,953.0"/><rect x="1131.3" y="952.0" width="91.0" height="40.0" rx="3"/><path d="M1135.3,961.0H1218.3V990.0H1135.3ZM1135.3,961.0L1131.3,953.0M1218.3,961.0L1222.3,953.0"/><rect x="1248.6" y="952.0" width="91.0" height="40.0" rx="3"/><path d="M1252.6,961.0H1335.6V990.0H1252.6ZM1252.6,961.0L1248.6,953.0M1335.6,961.0L1339.6,953.0"/><rect x="1365.9" y="952.0" width="91.0" height="40.0" rx="3"/><path d="M1369.9,961.0H1452.9V990.0H1369.9ZM1369.9,961.0L1365.9,953.0M1452.9,961.0L1456.9,953.0"/><rect x="1483.2" y="952.0" width="91.0" height="40.0" rx="3"/><path d="M1487.2,961.0H1570.2V990.0H1487.2ZM1487.2,961.0L1483.2,953.0M1570.2,961.0L1574.2,953.0"/><rect x="1013.0" y="1026.5" width="91.0" height="40.0" rx="3"/><path d="M1017.0,1035.5H1100.0V1064.5H1017.0ZM1017.0,1035.5L1013.0,1027.5M1100.0,1035.5L1104.0,1027.5"/><rect x="1130.3" y="1026.5" width="91.0" height="40.0" rx="3"/><path d="M1134.3,1035.5H1217.3V1064.5H1134.3ZM1134.3,1035.5L1130.3,1027.5M1217.3,1035.5L1221.3,1027.5"/><rect x="1247.6" y="1026.5" width="91.0" height="40.0" rx="3"/><path d="M1251.6,1035.5H1334.6V1064.5H1251.6ZM1251.6,1035.5L1247.6,1027.5M1334.6,1035.5L1338.6,1027.5"/><rect x="1364.9" y="1026.5" width="91.0" height="40.0" rx="3"/><path d="M1368.9,1035.5H1451.9V1064.5H1368.9ZM1368.9,1035.5L1364.9,1027.5M1451.9,1035.5L1455.9,1027.5"/><rect x="1482.2" y="1026.5" width="91.0" height="40.0" rx="3"/><path d="M1486.2,1035.5H1569.2V1064.5H1486.2ZM1486.2,1035.5L1482.2,1027.5M1569.2,1035.5L1573.2,1027.5"/>
</g>
<!-- left rounded body (wheel) -->
<path d="M385,605.500C396,610 405,620 410,635L413.500,680L416,1030H371L378,680Z" fill="url(#gL2)"/>
<path d="M400,700C404,690 410,680 413.500,680L416,1030H399Z" fill="#17181b"/>
<ellipse cx="405.500" cy="868" rx="7" ry="138" fill="none" stroke="#355a80" stroke-width="1" opacity=".6"/>
<path d="M0,568H335C360,569 385,580 389.400,603.500L384,605L379,631L378,680L371,1030H0Z" fill="#2a2d31"/>
<g fill="none" stroke="#3a6189" stroke-width="1.2">
<path d="M-57.3,265.1H24.7L27.7,277.0H-60.3Z" fill="#1a1b1e"/><rect x="-61.3" y="240.0" width="90.0" height="38.0" rx="3"/><path d="M-57.3,242.0H24.7V265.1H-57.3ZM-57.3,265.1L-61.3,278.0M24.7,265.1L28.7,278.0"/><path d="M60.0,265.1H142.0L145.0,277.0H57.0Z" fill="#1a1b1e"/><rect x="56.0" y="240.0" width="90.0" height="38.0" rx="3"/><path d="M60.0,242.0H142.0V265.1H60.0ZM60.0,265.1L56.0,278.0M142.0,265.1L146.0,278.0"/><path d="M177.3,265.1H259.3L262.3,277.0H174.3Z" fill="#1a1b1e"/><rect x="173.3" y="240.0" width="90.0" height="38.0" rx="3"/><path d="M177.3,242.0H259.3V265.1H177.3ZM177.3,265.1L173.3,278.0M259.3,265.1L263.3,278.0"/><path d="M294.6,265.1H376.6L379.6,277.0H291.6Z" fill="#1a1b1e"/><rect x="290.6" y="240.0" width="90.0" height="38.0" rx="3"/><path d="M294.6,242.0H376.6V265.1H294.6ZM294.6,265.1L290.6,278.0M376.6,265.1L380.6,278.0"/><path d="M-57.3,354.1H24.7L27.7,366.0H-60.3Z" fill="#1a1b1e"/><rect x="-61.3" y="329.0" width="90.0" height="38.0" rx="3"/><path d="M-57.3,331.0H24.7V354.1H-57.3ZM-57.3,354.1L-61.3,367.0M24.7,354.1L28.7,367.0"/><path d="M60.0,354.1H142.0L145.0,366.0H57.0Z" fill="#1a1b1e"/><rect x="56.0" y="329.0" width="90.0" height="38.0" rx="3"/><path d="M60.0,331.0H142.0V354.1H60.0ZM60.0,354.1L56.0,367.0M142.0,354.1L146.0,367.0"/><path d="M177.3,354.1H259.3L262.3,366.0H174.3Z" fill="#1a1b1e"/><rect x="173.3" y="329.0" width="90.0" height="38.0" rx="3"/><path d="M177.3,331.0H259.3V354.1H177.3ZM177.3,354.1L173.3,367.0M259.3,354.1L263.3,367.0"/><path d="M294.6,354.1H376.6L379.6,366.0H291.6Z" fill="#1a1b1e"/><rect x="290.6" y="329.0" width="90.0" height="38.0" rx="3"/><path d="M294.6,331.0H376.6V354.1H294.6ZM294.6,354.1L290.6,367.0M376.6,354.1L380.6,367.0"/><rect x="-63.3" y="425.0" width="90.0" height="35.0" rx="3"/><rect x="-59.3" y="428.0" width="82.0" height="29.0"/><rect x="54.0" y="425.0" width="90.0" height="35.0" rx="3"/><rect x="58.0" y="428.0" width="82.0" height="29.0"/><rect x="171.3" y="425.0" width="90.0" height="35.0" rx="3"/><rect x="175.3" y="428.0" width="82.0" height="29.0"/><rect x="288.6" y="425.0" width="90.0" height="35.0" rx="3"/><rect x="292.6" y="428.0" width="82.0" height="29.0"/><rect x="-64.3" y="518.0" width="90.0" height="40.0" rx="3"/><path d="M-60.3,527.0H21.7V556.0H-60.3ZM-60.3,527.0L-64.3,519.0M21.7,527.0L25.7,519.0"/><rect x="53.0" y="518.0" width="90.0" height="40.0" rx="3"/><path d="M57.0,527.0H139.0V556.0H57.0ZM57.0,527.0L53.0,519.0M139.0,527.0L143.0,519.0"/><rect x="170.3" y="518.0" width="90.0" height="40.0" rx="3"/><path d="M174.3,527.0H256.3V556.0H174.3ZM174.3,527.0L170.3,519.0M256.3,527.0L260.3,519.0"/><rect x="287.6" y="518.0" width="90.0" height="40.0" rx="3"/><path d="M291.6,527.0H373.6V556.0H291.6ZM291.6,527.0L287.6,519.0M373.6,527.0L377.6,519.0"/><path d="M-98.3,540.0H-25.3L-16.3,586.0H-107.3Z" fill="#26292d"/><path d="M-101.3,553.8H-22.3M-100.3,559.3H-23.3"/><path d="M19.0,540.0H92.0L101.0,586.0H10.0Z" fill="#26292d"/><path d="M16.0,553.8H95.0M17.0,559.3H94.0"/><path d="M136.3,540.0H209.3L218.3,586.0H127.3Z" fill="#26292d"/><path d="M133.3,553.8H212.3M134.3,559.3H211.3"/><path d="M253.6,540.0H326.6L335.6,586.0H244.6Z" fill="#26292d"/><path d="M250.6,553.8H329.6M251.6,559.3H328.6"/><path d="M-103.3,611.4H-24.3L-18.3,635.0H-109.3Z" fill="#1a1b1e"/><path d="M-100.3,592.0H-27.3L-18.3,635.0H-109.3ZM-103.3,611.4H-24.3M-98.3,602.0H-29.3"/><path d="M14.0,611.4H93.0L99.0,635.0H8.0Z" fill="#1a1b1e"/><path d="M17.0,592.0H90.0L99.0,635.0H8.0ZM14.0,611.4H93.0M19.0,602.0H88.0"/><path d="M131.3,611.4H210.3L216.3,635.0H125.3Z" fill="#1a1b1e"/><path d="M134.3,592.0H207.3L216.3,635.0H125.3ZM131.3,611.4H210.3M136.3,602.0H205.3"/><path d="M248.6,611.4H327.6L333.6,635.0H242.6Z" fill="#1a1b1e"/><path d="M251.6,592.0H324.6L333.6,635.0H242.6ZM248.6,611.4H327.6M253.6,602.0H322.6"/><path d="M-109.3,689.0H-26.3L-23.3,703.0H-112.3Z" fill="#1a1b1e"/><rect x="-113.3" y="660.0" width="91.0" height="44.0" rx="3"/><path d="M-109.3,662.0H-26.3V689.0H-109.3ZM-109.3,689.0L-113.3,704.0M-26.3,689.0L-22.3,704.0"/><path d="M8.0,689.0H91.0L94.0,703.0H5.0Z" fill="#1a1b1e"/><rect x="4.0" y="660.0" width="91.0" height="44.0" rx="3"/><path d="M8.0,662.0H91.0V689.0H8.0ZM8.0,689.0L4.0,704.0M91.0,689.0L95.0,704.0"/><path d="M125.3,689.0H208.3L211.3,703.0H122.3Z" fill="#1a1b1e"/><rect x="121.3" y="660.0" width="91.0" height="44.0" rx="3"/><path d="M125.3,662.0H208.3V689.0H125.3ZM125.3,689.0L121.3,704.0M208.3,689.0L212.3,704.0"/><path d="M242.6,689.0H325.6L328.6,703.0H239.6Z" fill="#1a1b1e"/><rect x="238.6" y="660.0" width="91.0" height="44.0" rx="3"/><path d="M242.6,662.0H325.6V689.0H242.6ZM242.6,689.0L238.6,704.0M325.6,689.0L329.6,704.0"/><path d="M-112.3,780.4H-29.3L-26.3,789.0H-115.3Z" fill="#1a1b1e"/><rect x="-116.3" y="750.0" width="91.0" height="40.0" rx="3"/><path d="M-112.3,752.0H-29.3V780.4H-112.3ZM-112.3,780.4L-116.3,790.0M-29.3,780.4L-25.3,790.0"/><path d="M5.0,780.4H88.0L91.0,789.0H2.0Z" fill="#1a1b1e"/><rect x="1.0" y="750.0" width="91.0" height="40.0" rx="3"/><path d="M5.0,752.0H88.0V780.4H5.0ZM5.0,780.4L1.0,790.0M88.0,780.4L92.0,790.0"/><path d="M122.3,780.4H205.3L208.3,789.0H119.3Z" fill="#1a1b1e"/><rect x="118.3" y="750.0" width="91.0" height="40.0" rx="3"/><path d="M122.3,752.0H205.3V780.4H122.3ZM122.3,780.4L118.3,790.0M205.3,780.4L209.3,790.0"/><path d="M239.6,780.4H322.6L325.6,789.0H236.6Z" fill="#1a1b1e"/><rect x="235.6" y="750.0" width="91.0" height="40.0" rx="3"/><path d="M239.6,752.0H322.6V780.4H239.6ZM239.6,780.4L235.6,790.0M322.6,780.4L326.6,790.0"/><rect x="-118.3" y="848.0" width="91.0" height="35.0" rx="3"/><rect x="-114.3" y="851.0" width="83.0" height="29.0"/><rect x="-1.0" y="848.0" width="91.0" height="35.0" rx="3"/><rect x="3.0" y="851.0" width="83.0" height="29.0"/><rect x="116.3" y="848.0" width="91.0" height="35.0" rx="3"/><rect x="120.3" y="851.0" width="83.0" height="29.0"/><rect x="233.6" y="848.0" width="91.0" height="35.0" rx="3"/><rect x="237.6" y="851.0" width="83.0" height="29.0"/><rect x="-119.3" y="940.0" width="91.0" height="40.0" rx="3"/><path d="M-115.3,949.0H-32.3V978.0H-115.3ZM-115.3,949.0L-119.3,941.0M-32.3,949.0L-28.3,941.0"/><rect x="-2.0" y="940.0" width="91.0" height="40.0" rx="3"/><path d="M2.0,949.0H85.0V978.0H2.0ZM2.0,949.0L-2.0,941.0M85.0,949.0L89.0,941.0"/><rect x="115.3" y="940.0" width="91.0" height="40.0" rx="3"/><path d="M119.3,949.0H202.3V978.0H119.3ZM119.3,949.0L115.3,941.0M202.3,949.0L206.3,941.0"/><rect x="232.6" y="940.0" width="91.0" height="40.0" rx="3"/><path d="M236.6,949.0H319.6V978.0H236.6ZM236.6,949.0L232.6,941.0M319.6,949.0L323.6,941.0"/><rect x="-120.3" y="1026.5" width="91.0" height="40.0" rx="3"/><path d="M-116.3,1035.5H-33.3V1064.5H-116.3ZM-116.3,1035.5L-120.3,1027.5M-33.3,1035.5L-29.3,1027.5"/><rect x="-3.0" y="1026.5" width="91.0" height="40.0" rx="3"/><path d="M1.0,1035.5H84.0V1064.5H1.0ZM1.0,1035.5L-3.0,1027.5M84.0,1035.5L88.0,1027.5"/><rect x="114.3" y="1026.5" width="91.0" height="40.0" rx="3"/><path d="M118.3,1035.5H201.3V1064.5H118.3ZM118.3,1035.5L114.3,1027.5M201.3,1035.5L205.3,1027.5"/><rect x="231.6" y="1026.5" width="91.0" height="40.0" rx="3"/><path d="M235.6,1035.5H318.6V1064.5H235.6ZM235.6,1035.5L231.6,1027.5M318.6,1035.5L322.6,1027.5"/>
</g>
<path d="M335,568C360,569 385,580 389.400,603.500L384,605L379,631L378,680L371,1030" stroke="#355a80" stroke-width="1.100" fill="none" opacity=".75"/><path d="M385,605.500C396,610 405,620 410,635L413.500,680" stroke="#355a80" stroke-width="1" fill="none" opacity=".6"/>

<!-- teal stripes -->
<path d="M1346,472H1376V1030H1346Z" fill="#1f7ea8" opacity=".34"/>
<path d="M1361,472V1030" stroke="#3c8aa8" stroke-width="1" opacity=".5"/>
<path d="M1361,471L1370,485H1352Z" fill="#3a4a52"/>
<path d="M25,682H55L14,1030H0V860Z" fill="#1f7ea8" opacity=".34"/><path d="M38.500,682L4,1030" stroke="#3c8aa8" stroke-width="1" opacity=".45"/>
<!-- ======= main blue body ======= -->
<!-- dark lower body -->
<path d="M416,457L928,463V1030H416Z" fill="#42538a"/>
<!-- side face on right -->
<path d="M953,260L954,338L997,330V540L989,584C985,592 982,600 981,612C972,618 964,630 961,644L957,680L951,760L948,1030H928V463L934,420Z" fill="#47589a"/>
<!-- light upper body -->
<path d="M274,210Q350,240 444,256L431.500,332L416,458L927,464L934,420L953,260Q1045,242 1147,210Z" fill="#5065a9"/>
<!-- bands -->
<path d="M170,210C190,250 300,305 431.500,332L444,256Q350,240 274,210Z" fill="url(#gbandL)"/>
<path d="M1250,210C1215,262 1100,310 954,338L953,260Q1045,242 1147,210Z" fill="#485894"/>
<path d="M953,260Q1045,242 1147,210" stroke="#3d4d80" stroke-width="1.2" fill="none"/>
<path d="M953,260L927,464" stroke="#40508a" stroke-width="1.2" fill="none"/>
<path d="M416,458L612,460M725,462L927,464" stroke="#3d4d80" stroke-width="1" fill="none"/>
<!-- white sliver + olive piece -->
<rect x="996" y="330" width="8" height="204" fill="#fff"/>
<path d="M998,534H1004V578L990,584Z" fill="#d4e4ef"/>
<path d="M996,538h8M995,542h9M994.500,546h9.500M994,550h10M993,554h11M992.500,558h11.500M992,562h12M991,566h13M990.500,570h13.500M990,574h14" stroke="#fff" stroke-width="1.600"/>
<path d="M988,397H1003V477H986V420Z" fill="#94967a"/>
<path d="M990,397H1003V415H988Z" fill="#b6b896"/>
<!-- cyan selection outlines -->
<g fill="none" stroke="#22c6ea" stroke-width="2" stroke-linecap="round">
<path d="M170,210C190,250 300,305 431.500,332"/>
<path d="M444,258L431.500,332L416,457V1030"/>
<path d="M1250,210C1215,262 1100,310 954,338"/>
<path d="M948,320V560L946,645L929,762"/>
<path d="M982,336L972,440L962,505"/>
<path d="M947,910L931,1030"/>
<path d="M969,556L966.500,645"/><path d="M997.500,534L989,584" stroke-width="1.600"/>
<path d="M995.500,396V331" stroke-width="1.500"/>
</g>
<g fill="none" stroke="#3a6aa0" stroke-width="1">
<path d="M960,340L958,640"/>
<path d="M937,420L928,600"/>
</g>
<!-- centre column -->
<path d="M616.700,412.700H638V397H709V413H725.700L716.700,460V721L612.700,723L612,460Z" fill="#42538a"/>
<path d="M616.700,412.700H638V397H709V413H725.700L716.700,460" stroke="#3b4b80" stroke-width="1" fill="none"/>
<path d="M621.700,678H716.700V721.700L612.700,723Z" fill="#5065a9"/>
<rect x="641" y="478" width="64" height="173" fill="#5065a9"/>
<path d="M660,451L704,452V475L655.700,477Z" fill="#94967a"/>
<path d="M660,451L704,452V456L659,455Z" fill="#a9ab8c"/>
<g fill="none" stroke="#22c6ea" stroke-width="2" stroke-linejoin="round" stroke-linecap="round">
<rect x="641" y="441" width="64" height="210.500"/>
<path d="M660,444L655,478M652,478H704M661,449L704,450"/>
<path d="M706,402L704.500,441"/>
<path d="M723,418L716.700,460V720" stroke-width="1.6"/>
</g>
<path d="M700,452V476" stroke="#111" stroke-width="2"/>

<!-- gear box -->
<g>
<clipPath id="boxclip"><path d="M498.400,757.400L847.600,761V1030H501Z"/></clipPath>
<g clip-path="url(#boxclip)" stroke-linejoin="round">
<rect x="498" y="757" width="13" height="273" fill="#4a5b9a"/>
<path d="M511,757V943" stroke="#3e4f88" stroke-width="1"/>
<!-- floor grid -->
<path d="M513,942.700L848,946.600V1030H500Z" fill="url(#floor)"/>
<path d="M513,942.700L848,946.600" stroke="#22c6ea" stroke-width="2.200" fill="none"/>
<path d="M513,942.700L501,1030" stroke="#22c6ea" stroke-width="2" fill="none"/>
<!-- orange gear: upper-left teeth -->
<g stroke="#4b5a80" stroke-width="1">
<path d="M538,763L585,759L607,772L602,790L585,798L560,790Z" fill="#c96f50"/>
<path d="M538,764L548,777L575,796L586,798L588,790L556,768Z" fill="#a9543a"/>
<path d="M561,788L580,797L592,806L576,809L556,796Z" fill="#a9543a"/>
<path d="M530,811L549,796L562,793L590,806L596,815H530Z" fill="#c96f50"/>
<path d="M530,811L549,805L590,812L594,815H530Z" fill="#a9543a"/>
</g>
<!-- disc -->
<circle cx="680" cy="822" r="80" fill="#9e5742"/>
<path d="M627,762A80,80 0 0 0 600.400,814" stroke="#8a4a38" stroke-width="3" fill="none" stroke-dasharray="9,5"/>
<path d="M733,762L748,772L759,795L760,815H752Z" fill="#7f4230"/>
<path d="M755,775l8,3l-3,11l-8,-4z" fill="#e07a3c" stroke="#4b5a80" stroke-width=".8"/>
<!-- lower teeth -->
<g stroke="#4b5a80" stroke-width="1">
<path d="M636,896H716L722,912L712,920H640Z" fill="#6e3527" stroke="none"/>
<path d="M563,896H590L568,908L563,901Z" fill="#a9543a"/>
<path d="M613,896H643L632,921L614,938L602.600,928L607,910Z" fill="#c96f50"/>
<path d="M626,917L606,936L614,938L632,922Z" fill="#a9543a"/>
<path d="M654,896H672L670,926L664,955L648,953L646,930Z" fill="#c96f50"/>
<path d="M654,930H661L659,955L650,953Z" fill="#a9543a"/>
<path d="M687,896H707L716,930L712.500,955L702.700,957L691,928Z" fill="#c96f50"/>
<path d="M696,930H703L712,955L703,957Z" fill="#a9543a"/>
<path d="M718,896H762V938L740,925L726,906Z" fill="#c96f50"/>
<path d="M740,925L762,938V946L736,930Z" fill="#a9543a"/>
</g>
<!-- hole -->
<circle cx="681" cy="819.500" r="23" fill="#b3b6bb" stroke="#4b5a80" stroke-width="1"/>
<path d="M672,798a23,23 0 0 1 16,0l-2,20h-10z" fill="#cfd2d6" opacity=".7"/>
<!-- bar -->
<path d="M504,815.300H848V836.300H502Z" fill="#b0b394"/>
<path d="M502,836.300H848V897H502Z" fill="#8f9278"/>
<path d="M502,836.300H848M502,897H770M504,815.300H760" stroke="#4b5a80" stroke-width="1.200" fill="none"/>
<!-- pink gear -->
<g stroke="#54508a" stroke-width="1.100">
<!-- silhouette -->
<path d="M764,762H843V930L838,971L801,1010L758,964L767,951L757,941L769,922L756,908L772,894L757,878L756,873L774,860L760,842L756,833L775,822L760,808L757,799L772,790L765,788L758,770Z" fill="#d8578f"/>
<!-- spine -->
<path d="M825,762H843V930L838,971L825,985Z" fill="#e85d9a"/>
<path d="M834.500,762V975" fill="none"/>
<!-- upper teeth: dark undersides + lit tips -->
<path d="M764,762H819L826,771L823,780L765,788L758,770Z" fill="#c24e86"/>
<path d="M757,799L800,776L826,782L823,800L760,808Z" fill="#c24e86"/>
<path d="M800,776L826,782L823,800L808,797Z" fill="#e85d9a"/>
<path d="M756,833L799,824L821,830L820,846L760,842Z" fill="#c24e86"/>
<path d="M756,833L799,824L803,832L760,838Z" fill="#e0609c"/>
<path d="M799,824L821,830L820,846L806,842Z" fill="#e85d9a"/>
<!-- middle tooth -->
<path d="M756,873L811,865L814,889L757,878Z" fill="#ec62a0"/>
<path d="M757,878L814,889L812,893L772,894Z" fill="#c24e86"/>
<!-- lower teeth: lit tops -->
<path d="M756,908L772,894L821,907L798,932Z" fill="#ec62a0"/>
<path d="M756,908L798,932L797,940L769,922Z" fill="#c24e86"/>
<path d="M798,932L821,907L822,925L806,940Z" fill="#d8578f"/>
<path d="M757,941L769,922L821,944L799,972Z" fill="#ec62a0"/>
<path d="M757,941L799,972L798,980L767,951Z" fill="#c24e86"/>
<path d="M799,972L821,944L823,960L808,978Z" fill="#d8578f"/>
<path d="M758,964L767,951L815,985L801,1010Z" fill="#ec62a0"/>
<path d="M801,1010L815,985L838,971L836,975Z" fill="#c24e86"/>
</g>
</g>
<path d="M498.400,757.400L847.600,761V1030M498.400,757.400L501,1030" stroke="#22c6ea" stroke-width="2.200" fill="none"/>
<path d="M506,815V897" stroke="#22c6ea" stroke-width="1.200" fill="none"/>
</g>

<!-- olive stubs -->
<rect x="400" y="815" width="16" height="79" fill="#94967a"/><rect x="400" y="815" width="16" height="18" fill="#b6b896"/>
<rect x="932" y="819" width="16" height="82" fill="#94967a"/><rect x="932" y="819" width="16" height="19" fill="#b6b896"/>
<!-- dashed guides -->
<path d="M700,210V762" stroke="#2a3152" stroke-width="1.4" stroke-dasharray="11,6" fill="none"/>
<path d="M201,487L416,489.400" stroke="#131418" stroke-width="1.300" stroke-dasharray="11,7" fill="none"/>
<path d="M416,489.400L737,493L1000,496.400" stroke="#27304f" stroke-width="1.300" stroke-dasharray="11,7" stroke-dashoffset="-1" fill="none"/>
<path d="M1000,496.400L1271,500" stroke="#131418" stroke-width="1.300" stroke-dasharray="11,7" fill="none"/>
<path d="M195,493L125,1030M1277,506L1213,1030" stroke="#15161a" stroke-width="1.2" stroke-dasharray="3,4" fill="none"/>
<path d="M0,680H196" stroke="#17181b" stroke-width="1" fill="none" opacity=".8"/>
<!-- handles -->
<rect x="189.500" y="481.500" width="11" height="11" fill="#f2f2f2" stroke="#3a3a3a" stroke-width="1"/>
<rect x="1271.500" y="494.500" width="11" height="11" fill="#f2f2f2" stroke="#3a3a3a" stroke-width="1"/>
<rect x="732" y="488" width="10" height="10" fill="#2a2a2c"/>
<rect x="694" y="766" width="12" height="12" fill="#f2f2f2" stroke="#222" stroke-width="2"/>
<path d="M692,820H708L700,838Z" fill="#1e1e1e"/>
<rect x="154" y="760" width="9" height="9" fill="#303236"/>
<rect x="1237" y="773" width="9" height="9" fill="#303236"/>
</svg>

<!-- ViewCube -->
<svg class="abs" style="left:34px;top:38px" width="90" height="92" viewBox="34 248 90 92" font-family="Liberation Sans,sans-serif">
<defs><linearGradient id="vcf" x1="0" x2="0" y1="0" y2="1"><stop offset="0" stop-color="#c2c2c2"/><stop offset=".85" stop-color="#b0b0b0"/><stop offset="1" stop-color="#8a8a8a"/></linearGradient></defs>
<path d="M45,251.500H112L117.400,263H39.600Z" fill="#c9c9c9" fill-opacity=".88"/>
<rect x="39.600" y="263" width="77.800" height="70.700" fill="url(#vcf)" fill-opacity=".86"/>
<path d="M41,333.700H116v3H43z" fill="#555" fill-opacity=".35"/>
<text x="78.500" y="308" font-size="17.500" font-weight="bold" fill="#50535b" text-anchor="middle" letter-spacing=".2" transform="translate(78.500 0) scale(.88 1) translate(-78.500 0)">FRONT</text>
<text x="78.500" y="262" font-size="11" font-weight="bold" fill="#50535b" text-anchor="middle" transform="translate(0 209.600) scale(1 .2)">TOP</text>
</svg>
<!-- nav buttons -->
<svg class="abs" style="left:22px;top:160px" width="44" height="254" viewBox="22 370 44 254">
<g fill="#c8c8c8" fill-opacity=".62">
<circle cx="44" cy="391" r="20"/><circle cx="44" cy="443.700" r="20"/><circle cx="44" cy="496" r="20"/><circle cx="44" cy="548.500" r="20"/><circle cx="44" cy="601" r="20"/>
</g>
<g fill="none" stroke="#3b3d42" stroke-width="1.600">
<path d="M34.500,391.500L44,382.500L53.500,391.500M37,389.500V399.500H41.500V393.500H46.500V399.500H51V389.500"/>
<path d="M35.500,439.500V435H40M48,435H52.500V439.500M52.500,448V452.500H48M40,452.500H35.500V448"/>
<path d="M44,488.500V503.500M36.500,496H51.500" stroke-width="1.800"/>
<path d="M36,548.500H52" stroke-width="1.800"/>
<path d="M35,609.500H53" stroke-width="1.300"/>
<path d="M39,597.500L42,594.500H50.500V605L47.500,608H39ZM39,597.500H47.500V608M47.500,597.500L50.500,594.500" stroke-width="1.100"/>
</g>
</svg>
<!-- Shape inspector -->
<div class="abs" style="left:1240px;top:15px;width:320px;height:219px;border-radius:4px;overflow:hidden;box-shadow:0 1px 6px rgba(0,0,0,.5)">
  <div class="abs" style="left:0;top:0;width:320px;height:51px;background:#fff"></div>
  <div class="abs" style="left:0;top:51px;width:320px;height:168px;background:rgba(236,236,236,.965)"></div>
  <div class="abs" style="left:50px;top:0;width:1px;height:50px;background:#dde1e8"></div>
  <div class="abs" style="left:64px;top:12px;font-size:18.500px;color:#34475c;-webkit-text-stroke:.55px #34475c;line-height:26px;letter-spacing:.25px">Shape</div>
  <div class="abs" style="left:40px;top:154px;width:120px;text-align:center;font-size:14.500px;color:#5b6470;letter-spacing:.7px;line-height:18px">Solid</div>
  <div class="abs" style="left:160px;top:154px;width:120px;text-align:center;font-size:14.500px;color:#5b6470;letter-spacing:.7px;line-height:18px">Hole</div>
  <svg class="abs" style="left:0;top:0" width="320" height="219" viewBox="1240 225 320 219">
    <defs><pattern id="hs2" width="13.400" height="13.400" patternUnits="userSpaceOnUse" patternTransform="rotate(-45)"><rect width="13.400" height="13.400" fill="#c9c9c9"/><rect width="13.400" height="6.200" fill="#adadad"/></pattern></defs>
    <path d="M1257,252.500L1265,244L1273,252.500Z" fill="#34495e" stroke="#34495e" stroke-width="2" stroke-linejoin="round"/>
    <!-- lock -->
    <rect x="1476" y="245" width="16" height="13" rx="2" fill="#5b6b80"/>
    <path d="M1480,245V241a4.500,4.500 0 0 1 9,0V243" fill="none" stroke="#5b6b80" stroke-width="2"/>
    <!-- bulb -->
    <path d="M1526.500,235.500a7.800,7.800 0 0 1 5,13.500c-1.200,1.200 -1.700,2.300 -1.700,3.700h-6.600c0,-1.400 -.5,-2.500 -1.700,-3.700a7.800,7.800 0 0 1 5,-13.500z" fill="#c6cbd3" stroke="#8994a5" stroke-width="1.400"/>
    <path d="M1523.500,254.800h6M1524.300,257h4.400" stroke="#8994a5" stroke-width="1.400"/>
    <!-- solid -->
    <circle cx="1339.700" cy="337.500" r="30" fill="#fff" stroke="#4a86d8" stroke-width="1.600"/>
    <circle cx="1339.700" cy="337.500" r="25" fill="#3c52a0"/>
    <!-- hole -->
    <circle cx="1460" cy="337.500" r="31" fill="#fff"/>
    <circle cx="1460" cy="337.500" r="25" fill="url(#hs2)"/>
  </svg>
</div>
<!-- dimension label -->
<div class="abs" style="left:1376.500px;top:538.500px;width:61px;height:33px;background:#d8d8d8;border:1.500px solid #f4f4f4;border-radius:3.500px;font-size:17.500px;color:#111;text-align:center;line-height:30px;letter-spacing:-.2px">40.00</div>
<!-- grid controls -->
<div class="abs" style="left:1450px;top:740px;width:113px;height:27px;background:rgba(205,205,205,.94);border-radius:3px;font-size:15px;color:#4a5a70;text-align:center;line-height:26px;letter-spacing:.3px">Edit Grid</div>
<div class="abs" style="left:1396px;top:784px;font-size:15px;color:#3c4858;letter-spacing:.35px;line-height:18px;white-space:nowrap">Snap Grid</div>
<div class="abs" style="left:1473px;top:780px;width:90px;height:27px;background:#cfcfcf;border:1.500px solid #f4f4f4;border-radius:3.500px;font-size:15px;color:#444;line-height:24px;padding-left:10px;white-space:nowrap">0.1 mm</div>
<svg class="abs" style="left:1541px;top:788px" width="10" height="7" viewBox="0 0 10 7"><path d="M1,6L5,1L9,6Z" fill="#111"/></svg>

</div>
<!-- ===== Right panel ===== -->
<div id="side"><svg class="abs" style="left:0;top:0" width="345" height="821" viewBox="1575 209 345 821" font-family="Liberation Sans,sans-serif">
<defs>
<pattern id="hs" width="17" height="17" patternUnits="userSpaceOnUse" patternTransform="rotate(40)"><rect width="17" height="8.500" fill="#000" fill-opacity=".09"/></pattern>
<linearGradient id="cylh" x1="0" x2="1"><stop offset="0" stop-color="#878d99"/><stop offset=".35" stop-color="#a6acb8"/><stop offset=".8" stop-color="#c6ccd8"/><stop offset="1" stop-color="#b4bac6"/></linearGradient>
<linearGradient id="cylo" x1="0" x2="1"><stop offset="0" stop-color="#80440f"/><stop offset=".3" stop-color="#b56018"/><stop offset=".8" stop-color="#df7a1e"/><stop offset="1" stop-color="#c96c1b"/></linearGradient>
<radialGradient id="sph" cx=".62" cy=".35" r=".75"><stop offset="0" stop-color="#05a8e2"/><stop offset=".6" stop-color="#0b8cc3"/><stop offset="1" stop-color="#0c74a4"/></radialGradient>
<radialGradient id="halo" cx=".5" cy=".5" r=".5"><stop offset="0" stop-color="#d9d9de" stop-opacity=".9"/><stop offset=".7" stop-color="#e4e4e8" stop-opacity=".5"/><stop offset="1" stop-color="#f0f0f3" stop-opacity="0"/></radialGradient>
<filter id="cardsh" x="-5%" y="-10%" width="110%" height="130%"><feGaussianBlur stdDeviation="2"/></filter>
</defs>
<!-- Workplane icon -->
<g fill="none" stroke="#1a87c0">
<path d="M1611.500,231L1652,227.500V271L1612.500,267.500Z" stroke-width="2.200" stroke-linejoin="round"/>
<path d="M1617.300,230.500L1618.200,268M1623,230L1623.800,268.500M1628.800,229.500L1629.400,269M1634.600,229L1635,269.500M1640.400,228.500L1640.600,270M1646.200,228L1646.300,270.500M1611.600,236.500L1652,233.800M1611.800,241.800L1652,240M1611.900,247L1652,246.300M1612,252.200L1652,252.500M1612.200,257.400L1652,258.800M1612.300,262.600L1652,265" stroke-width=".85"/>
</g>
<!-- Ruler icon -->
<g fill="none" stroke="#1a87c0" stroke-linejoin="round">
<path d="M1727,231.500L1735,230.500L1737.500,258L1768.500,260.500L1768,270.500L1729.500,267.500Z" stroke-width="2.200"/>
<path d="M1734,238l-3,.3M1734.500,244l-4,.4M1735,250l-3,.3M1735.500,256l-4,.4M1737.500,258L1737.800,264.500M1745,259v3.500M1752,259.500v4.500M1759,260v3.500" stroke-width="1.200"/>
</g>
<!-- Notes icon -->
<g fill="none" stroke="#1a87c0">
<path d="M1850,229L1874.500,228.500a4,4 0 0 1 4,4V254a4,4 0 0 1 -4,4H1868.500L1861.500,270L1856,258.500H1850a4,4 0 0 1 -4,-4V233a4,4 0 0 1 4,-4z" stroke-width="2.200" stroke-linejoin="round"/>
<path d="M1854.500,238.800H1869.500M1854.500,243.300H1869.500M1854.500,247.800H1869.500M1854.500,252.300H1865" stroke-width="1.200"/>
</g>
<g font-size="15.500" fill="#4a5a70" text-anchor="middle" letter-spacing=".3">
<text x="1632.500" y="294.200">Workplane</text>
<text x="1748" y="294.200">Ruler</text>
<text x="1863" y="294.200">Notes</text>
</g>
<path d="M1575,309.500H1920" stroke="#dde1e8" stroke-width="1"/>
<!-- dropdown card -->
<rect x="1583" y="321" width="329" height="75" rx="3" fill="#9aa0ad" opacity=".45" filter="url(#cardsh)"/>
<rect x="1582" y="318" width="331" height="76" rx="3" fill="#f4f4f6" stroke="#e2e5eb" stroke-width="1"/>
<text x="1596" y="342.300" font-size="14" fill="#4a5a70">Tinkercad</text>
<text x="1596" y="373.200" font-size="18.500" fill="#3e4e66">Basic Shapes</text>
<path d="M1879,353.500H1891L1885,360.500Z" fill="#111"/>
<path d="M1583,408.500H1900" stroke="#dde1e8" stroke-width="1"/>
<!-- scrollbar -->
<rect x="1904.500" y="409" width="9.500" height="168.500" rx="4.700" fill="#c1c1c1"/>
<!-- halos -->
<ellipse cx="1668" cy="492" rx="62" ry="66" fill="url(#halo)" opacity=".5"/>
<ellipse cx="1825" cy="492" rx="56" ry="64" fill="url(#halo)" opacity=".6"/>
<ellipse cx="1668" cy="682" rx="62" ry="66" fill="url(#halo)" opacity=".5"/>
<ellipse cx="1825" cy="682" rx="56" ry="64" fill="url(#halo)" opacity=".6"/>
<ellipse cx="1669" cy="871" rx="54" ry="56" fill="url(#halo)"/>
<ellipse cx="1823" cy="884" rx="50" ry="52" fill="url(#halo)" opacity=".5"/>
<ellipse cx="1669" cy="1050" rx="50" ry="50" fill="url(#halo)" opacity=".8"/>
<ellipse cx="1825" cy="1050" rx="50" ry="50" fill="url(#halo)" opacity=".8"/>
<!-- Box hole -->
<g stroke="#727884" stroke-width="1.300" stroke-linejoin="round">
<path d="M1648.400,440.600L1712.900,451L1694.800,482.700L1621.500,471.600Z" fill="#cbd1dd"/>
<path d="M1621.500,471.600L1694.800,482.700L1693,544.600L1626,530.900Z" fill="#a9afbc"/>
<path d="M1694.800,482.700L1712.900,451L1709.500,506L1693,544.600Z" fill="#bec4d0"/>
</g>
<path d="M1648.400,440.600L1712.900,451L1709.500,506L1693,544.600L1626,530.900L1621.500,471.600Z" fill="url(#hs)"/>
<!-- Cylinder hole -->
<path d="M1789,461.300L1793,521A33,17.500 0 0 0 1859,521L1862.400,461.300Z" fill="url(#cylh)" stroke="#727884" stroke-width="1.300"/>
<path d="M1789,461.300L1793,521A33,17.500 0 0 0 1859,521L1862.400,461.300Z" fill="url(#hs)"/>
<ellipse cx="1825.700" cy="461.300" rx="36.700" ry="17.200" fill="#c9cfdb" stroke="#727884" stroke-width="1.300"/>
<ellipse cx="1825.700" cy="461.300" rx="36.700" ry="17.200" fill="url(#hs)"/>
<!-- Box red -->
<g stroke="#8a0f1c" stroke-width="1.300" stroke-linejoin="round">
<path d="M1648.400,630.600L1712.900,641L1694.800,672.700L1621.500,661.600Z" fill="#c8182a"/>
<path d="M1621.500,661.600L1694.800,672.700L1693,734.600L1626,720.900Z" fill="#a81422"/>
<path d="M1694.800,672.700L1712.900,641L1709.500,696L1693,734.600Z" fill="#bd1627"/>
</g>
<!-- Cylinder orange -->
<path d="M1789,651.300L1793,711A33,17.500 0 0 0 1859,711L1862.400,651.300Z" fill="url(#cylo)" stroke="#85470f" stroke-width="1.300"/>
<ellipse cx="1825.700" cy="651.300" rx="36.700" ry="17.200" fill="#d1711c" stroke="#85470f" stroke-width="1.300"/>
<!-- Sphere -->
<circle cx="1669.400" cy="871.400" r="34.800" fill="url(#sph)"/>
<!-- Scribble -->
<linearGradient id="scrg" gradientUnits="userSpaceOnUse" x1="1790" x2="1858" y1="0" y2="0"><stop offset="0" stop-color="#8fb3d1"/><stop offset=".35" stop-color="#7f9fbc"/><stop offset=".6" stop-color="#6f8ea9"/><stop offset="1" stop-color="#86a9c7"/></linearGradient>
<g fill="none" stroke-linecap="round" stroke-linejoin="round" stroke-width="9.500" stroke="url(#scrg)">
<path d="M1852,855.500V858" transform="translate(0 22)"/><path d="M1852,855.500V858" transform="translate(0 21)"/><path d="M1852,855.500V858" transform="translate(0 20)"/><path d="M1852,855.500V858" transform="translate(0 19)"/><path d="M1852,855.500V858" transform="translate(0 18)"/><path d="M1852,855.500V858" transform="translate(0 17)"/><path d="M1852,855.500V858" transform="translate(0 16)"/><path d="M1852,855.500V858" transform="translate(0 15)"/><path d="M1852,855.500V858" transform="translate(0 14)"/><path d="M1852,855.500V858" transform="translate(0 13)"/><path d="M1852,855.500V858" transform="translate(0 12)"/><path d="M1852,855.500V858" transform="translate(0 11)"/><path d="M1852,855.500V858" transform="translate(0 10)"/><path d="M1852,855.500V858" transform="translate(0 9)"/><path d="M1852,855.500V858" transform="translate(0 8)"/><path d="M1852,855.500V858" transform="translate(0 7)"/><path d="M1852,855.500V858" transform="translate(0 6)"/><path d="M1852,855.500V858" transform="translate(0 5)"/><path d="M1852,855.500V858" transform="translate(0 4)"/><path d="M1852,855.500V858" transform="translate(0 3)"/><path d="M1852,855.500V858" transform="translate(0 2)"/><path d="M1852,855.500V858" transform="translate(0 1)"/>
<path d="M1852,855.500V858" stroke="#9fc6e4"/>
<path d="M1795,873C1793,864 1797,860 1801,862C1806,864 1808,872 1812,876C1812,866 1812,854 1818,853C1825,852 1832,868 1851,888C1845,879 1839,868 1839,860C1839,853 1841,849 1844,848" transform="translate(0 29)"/><path d="M1795,873C1793,864 1797,860 1801,862C1806,864 1808,872 1812,876C1812,866 1812,854 1818,853C1825,852 1832,868 1851,888C1845,879 1839,868 1839,860C1839,853 1841,849 1844,848" transform="translate(0 28)"/><path d="M1795,873C1793,864 1797,860 1801,862C1806,864 1808,872 1812,876C1812,866 1812,854 1818,853C1825,852 1832,868 1851,888C1845,879 1839,868 1839,860C1839,853 1841,849 1844,848" transform="translate(0 27)"/><path d="M1795,873C1793,864 1797,860 1801,862C1806,864 1808,872 1812,876C1812,866 1812,854 1818,853C1825,852 1832,868 1851,888C1845,879 1839,868 1839,860C1839,853 1841,849 1844,848" transform="translate(0 26)"/><path d="M1795,873C1793,864 1797,860 1801,862C1806,864 1808,872 1812,876C1812,866 1812,854 1818,853C1825,852 1832,868 1851,888C1845,879 1839,868 1839,860C1839,853 1841,849 1844,848" transform="translate(0 25)"/><path d="M1795,873C1793,864 1797,860 1801,862C1806,864 1808,872 1812,876C1812,866 1812,854 1818,853C1825,852 1832,868 1851,888C1845,879 1839,868 1839,860C1839,853 1841,849 1844,848" transform="translate(0 24)"/><path d="M1795,873C1793,864 1797,860 1801,862C1806,864 1808,872 1812,876C1812,866 1812,854 1818,853C1825,852 1832,868 1851,888C1845,879 1839,868 1839,860C1839,853 1841,849 1844,848" transform="translate(0 23)"/><path d="M1795,873C1793,864 1797,860 1801,862C1806,864 1808,872 1812,876C1812,866 1812,854 1818,853C1825,852 1832,868 1851,888C1845,879 1839,868 1839,860C1839,853 1841,849 1844,848" transform="translate(0 22)"/><path d="M1795,873C1793,864 1797,860 1801,862C1806,864 1808,872 1812,876C1812,866 1812,854 1818,853C1825,852 1832,868 1851,888C1845,879 1839,868 1839,860C1839,853 1841,849 1844,848" transform="translate(0 21)"/><path d="M1795,873C1793,864 1797,860 1801,862C1806,864 1808,872 1812,876C1812,866 1812,854 1818,853C1825,852 1832,868 1851,888C1845,879 1839,868 1839,860C1839,853 1841,849 1844,848" transform="translate(0 20)"/><path d="M1795,873C1793,864 1797,860 1801,862C1806,864 1808,872 1812,876C1812,866 1812,854 1818,853C1825,852 1832,868 1851,888C1845,879 1839,868 1839,860C1839,853 1841,849 1844,848" transform="translate(0 19)"/><path d="M1795,873C1793,864 1797,860 1801,862C1806,864 1808,872 1812,876C1812,866 1812,854 1818,853C1825,852 1832,868 1851,888C1845,879 1839,868 1839,860C1839,853 1841,849 1844,848" transform="translate(0 18)"/><path d="M1795,873C1793,864 1797,860 1801,862C1806,864 1808,872 1812,876C1812,866 1812,854 1818,853C1825,852 1832,868 1851,888C1845,879 1839,868 1839,860C1839,853 1841,849 1844,848" transform="translate(0 17)"/><path d="M1795,873C1793,864 1797,860 1801,862C1806,864 1808,872 1812,876C1812,866 1812,854 1818,853C1825,852 1832,868 1851,888C1845,879 1839,868 1839,860C1839,853 1841,849 1844,848" transform="translate(0 16)"/><path d="M1795,873C1793,864 1797,860 1801,862C1806,864 1808,872 1812,876C1812,866 1812,854 1818,853C1825,852 1832,868 1851,888C1845,879 1839,868 1839,860C1839,853 1841,849 1844,848" transform="translate(0 15)"/><path d="M1795,873C1793,864 1797,860 1801,862C1806,864 1808,872 1812,876C1812,866 1812,854 1818,853C1825,852 1832,868 1851,888C1845,879 1839,868 1839,860C1839,853 1841,849 1844,848" transform="translate(0 14)"/><path d="M1795,873C1793,864 1797,860 1801,862C1806,864 1808,872 1812,876C1812,866 1812,854 1818,853C1825,852 1832,868 1851,888C1845,879 1839,868 1839,860C1839,853 1841,849 1844,848" transform="translate(0 13)"/><path d="M1795,873C1793,864 1797,860 1801,862C1806,864 1808,872 1812,876C1812,866 1812,854 1818,853C1825,852 1832,868 1851,888C1845,879 1839,868 1839,860C1839,853 1841,849 1844,848" transform="translate(0 12)"/><path d="M1795,873C1793,864 1797,860 1801,862C1806,864 1808,872 1812,876C1812,866 1812,854 1818,853C1825,852 1832,868 1851,888C1845,879 1839,868 1839,860C1839,853 1841,849 1844,848" transform="translate(0 11)"/><path d="M1795,873C1793,864 1797,860 1801,862C1806,864 1808,872 1812,876C1812,866 1812,854 1818,853C1825,852 1832,868 1851,888C1845,879 1839,868 1839,860C1839,853 1841,849 1844,848" transform="translate(0 10)"/><path d="M1795,873C1793,864 1797,860 1801,862C1806,864 1808,872 1812,876C1812,866 1812,854 1818,853C1825,852 1832,868 1851,888C1845,879 1839,868 1839,860C1839,853 1841,849 1844,848" transform="translate(0 9)"/><path d="M1795,873C1793,864 1797,860 1801,862C1806,864 1808,872 1812,876C1812,866 1812,854 1818,853C1825,852 1832,868 1851,888C1845,879 1839,868 1839,860C1839,853 1841,849 1844,848" transform="translate(0 8)"/><path d="M1795,873C1793,864 1797,860 1801,862C1806,864 1808,872 1812,876C1812,866 1812,854 1818,853C1825,852 1832,868 1851,888C1845,879 1839,868 1839,860C1839,853 1841,849 1844,848" transform="translate(0 7)"/><path d="M1795,873C1793,864 1797,860 1801,862C1806,864 1808,872 1812,876C1812,866 1812,854 1818,853C1825,852 1832,868 1851,888C1845,879 1839,868 1839,860C1839,853 1841,849 1844,848" transform="translate(0 6)"/><path d="M1795,873C1793,864 1797,860 1801,862C1806,864 1808,872 1812,876C1812,866 1812,854 1818,853C1825,852 1832,868 1851,888C1845,879 1839,868 1839,860C1839,853 1841,849 1844,848" transform="translate(0 5)"/><path d="M1795,873C1793,864 1797,860 1801,862C1806,864 1808,872 1812,876C1812,866 1812,854 1818,853C1825,852 1832,868 1851,888C1845,879 1839,868 1839,860C1839,853 1841,849 1844,848" transform="translate(0 4)"/><path d="M1795,873C1793,864 1797,860 1801,862C1806,864 1808,872 1812,876C1812,866 1812,854 1818,853C1825,852 1832,868 1851,888C1845,879 1839,868 1839,860C1839,853 1841,849 1844,848" transform="translate(0 3)"/><path d="M1795,873C1793,864 1797,860 1801,862C1806,864 1808,872 1812,876C1812,866 1812,854 1818,853C1825,852 1832,868 1851,888C1845,879 1839,868 1839,860C1839,853 1841,849 1844,848" transform="translate(0 2)"/><path d="M1795,873C1793,864 1797,860 1801,862C1806,864 1808,872 1812,876C1812,866 1812,854 1818,853C1825,852 1832,868 1851,888C1845,879 1839,868 1839,860C1839,853 1841,849 1844,848" transform="translate(0 1)"/>
<path d="M1795,873C1793,864 1797,860 1801,862C1806,864 1808,872 1812,876C1812,866 1812,854 1818,853C1825,852 1832,868 1851,888C1845,879 1839,868 1839,860C1839,853 1841,849 1844,848" stroke="#9fc6e4"/>
</g>
<g font-size="16" fill="#4a5a70" text-anchor="middle" letter-spacing=".3">
<text x="1669.700" y="568.300">Box</text>
<text x="1825.700" y="568.300">Cylinder</text>
<text x="1669.700" y="758.300">Box</text>
<text x="1825.700" y="758.300">Cylinder</text>
<text x="1669.500" y="949.200">Sphere</text>
<text x="1825.700" y="949.200">Scribble</text>
</g>
</svg>
</div>
<div id="collapse" class="abs" style="left:1564px;top:591px;width:19px;height:58px;background:#fff"></div>
<svg class="abs" style="left:1567px;top:610px" width="12" height="24" viewBox="0 0 12 24"><path d="M3,1.500C7,8 8.500,10 8.500,12C8.500,14 7,16 3,22.500" stroke="#111" stroke-width="2.200" fill="none"/></svg>
<!-- ===== Taskbar ===== -->
<div id="task">
  <div id="search"><span>Type here to search</span></div>
<svg class="abs" style="left:0;top:0" width="1920" height="50" viewBox="0 1030 1920 50" font-family="Liberation Sans,sans-serif">
<defs>
<linearGradient id="tbg" x1="0" x2="1"><stop offset="0" stop-color="#2b2422"/><stop offset=".5" stop-color="#2e2521"/><stop offset="1" stop-color="#2a2220"/></linearGradient>
<radialGradient id="steam" cx=".7" cy=".2" r="1"><stop offset="0" stop-color="#1f5fa8"/><stop offset="1" stop-color="#111c3c"/></radialGradient>
</defs>
<rect x="490" y="1030" width="1430" height="50" fill="url(#tbg)"/>
<!-- active highlights -->
<rect x="924" y="1030" width="61" height="50" fill="#544c49"/>
<rect x="1110" y="1030" width="61" height="50" fill="#463d39"/>
<rect x="619.500" y="1077" width="50" height="3" fill="#7ab5e6"/>
<rect x="924" y="1077" width="61" height="3" fill="#8fb8e0"/>
<rect x="1110" y="1077" width="61" height="3" fill="#6a8fb5" opacity="0"/>
<!-- windows logo -->
<path d="M19,1048.200L27.500,1047V1054.800H19ZM28.700,1046.800L40,1045.200V1054.800H28.700ZM19,1056H27.500V1063.800L19,1062.600ZM28.700,1056H40V1065.600L28.700,1064Z" fill="#fff"/>
<!-- search magnifier -->
<circle cx="88" cy="1052.500" r="6.700" fill="none" stroke="#222" stroke-width="1.600"/><path d="M83.300,1057.700L75.500,1065.500" stroke="#222" stroke-width="1.800"/>
<!-- cortana -->
<circle cx="520" cy="1054.800" r="8.300" fill="none" stroke="#fff" stroke-width="2.800"/>
<!-- task view -->
<g fill="none" stroke="#fff" stroke-width="1.500"><rect x="570.500" y="1050.200" width="13.500" height="9.600"/><path d="M570,1045.700h14.500M570,1064.300h14.500M588.800,1045v4.500M588.800,1052.200v5.600M588.800,1060.500v4.500"/></g>
<!-- explorer -->
<path d="M630,1044a1.500,1.500 0 0 1 1.500,-1.500h8l2,2.500h15a1.500,1.500 0 0 1 1.500,1.500V1062h-28z" fill="#e8a726"/>
<path d="M630,1048h28v17a1.500,1.500 0 0 1 -1.500,1.500h-25a1.500,1.500 0 0 1 -1.500,-1.500z" fill="#fbd35f"/>
<path d="M636,1058h16v8.500h-16z" fill="#3b8ad8"/><path d="M640,1062.500h8v4h-8z" fill="#fbd35f"/>
<!-- store -->
<path d="M697,1048V1045a8.500,7 0 0 1 17,0V1048" fill="none" stroke="#f2f2f2" stroke-width="2"/>
<path d="M690.500,1048H720.500V1068.500a1.500,1.500 0 0 1 -1.500,1.500H692a1.500,1.500 0 0 1 -1.500,-1.500z" fill="#f4f4f4"/>
<rect x="699.500" y="1052.800" width="5.400" height="5.400" fill="#f25022"/><rect x="706" y="1052.800" width="5.400" height="5.400" fill="#7fba00"/><rect x="699.500" y="1059.300" width="5.400" height="5.400" fill="#00a4ef"/><rect x="706" y="1059.300" width="5.400" height="5.400" fill="#ffb900"/>
<!-- steam -->
<circle cx="767.300" cy="1055" r="14.500" fill="url(#steam)"/>
<circle cx="772.500" cy="1051.500" r="4.600" fill="none" stroke="#fff" stroke-width="2"/><circle cx="772.500" cy="1051.500" r="1.800" fill="#fff"/>
<path d="M753,1056l8.500,3.500l7,-5" stroke="#fff" stroke-width="2.600" fill="none"/><circle cx="762" cy="1061" r="3.400" fill="#fff"/><circle cx="762" cy="1061" r="1.600" fill="#1a3666"/>
<!-- predator -->
<path d="M815,1041h29l1,4l-2,22l-3,3h-21l-3,-3l-2,-22z" fill="#0c0d10"/>
<path d="M815,1042l-1,4l2,21l1.500,2l-1,-25zM844,1042l1,4l-2,21l-1.500,2l1,-25z" fill="#18b8e6"/>
<path d="M821,1048l4,3l4.500,-5l4.500,5l4,-3l-1.500,10l-3,6l-1.500,-7l-2.500,3l-2.500,-3l-1.500,7l-3,-6z" fill="#8b8e93"/>
<!-- mail -->
<path d="M877,1052l15,-10.500l15,10.500v15.500h-30z" fill="#0f6cbd"/><path d="M880,1050h24v12h-24z" fill="#e9f2fb"/><path d="M877,1052l15,9.500l15,-9.500v15.500a1,1 0 0 1 -1,1h-28a1,1 0 0 1 -1,-1z" fill="#1c8ae6"/><path d="M877,1068l12,-10M907,1068l-12,-10" stroke="#3aa0f0" stroke-width="1.200"/>
<circle cx="907.400" cy="1065" r="10.300" fill="#2b2b2b" stroke="#e8e8e8" stroke-width="1.200"/>
<text x="907.400" y="1069.800" font-size="13.500" fill="#fff" text-anchor="middle" font-weight="bold" letter-spacing="-.6">41</text>
<!-- chrome -->
<circle cx="954" cy="1055" r="14" fill="#fbc116"/>
<path d="M954,1055L941.900,1048A14,14 0 0 1 966.100,1048Z" fill="#e33b2e"/><path d="M954,1041a14,14 0 0 1 12.100,7H954z" fill="#e33b2e"/>
<path d="M941.900,1048A14,14 0 0 0 954,1069L960.500,1058L954,1055Z" fill="#2da94f"/>
<path d="M941.900,1048L948,1058.500L954,1055Z" fill="#2da94f"/>
<circle cx="954" cy="1055" r="6.600" fill="#f1f1f1"/><circle cx="954" cy="1055" r="5.200" fill="#4a8af4"/>
<!-- fusion 360 -->
<rect x="1000.800" y="1040" width="30.600" height="30" fill="#f7e8d8"/>
<path d="M1010,1043.500h16l-1.500,5.500h-9.500v5h8.500l-1.500,5h-7v8l-5,-2z" fill="#f08a1d"/><path d="M1010,1043.500l5,2v21.500l-5,-2z" fill="#c8650c"/>
<text x="1019" y="1068.300" font-size="6.500" fill="#e07a18" font-weight="bold">360</text>
<!-- arduino -->
<circle cx="1077.800" cy="1054.700" r="13.700" fill="#1a989c"/>
<path d="M1077.800,1054.700c-2,-3.500 -4,-4.300 -5.800,-4.300a4.300,4.300 0 0 0 0,8.600c1.800,0 3.800,-.8 5.800,-4.300c2,-3.500 4,-4.300 5.800,-4.300a4.300,4.300 0 0 1 0,8.600c-1.800,0 -3.800,-.8 -5.800,-4.300z" fill="none" stroke="#fff" stroke-width="2"/>
<!-- zoom -->
<rect x="1126" y="1041" width="28" height="28" rx="8.500" fill="#4a8cf7"/>
<rect x="1131.500" y="1050" width="12" height="10" rx="2.200" fill="#fff"/><path d="M1144.500,1053.500l5,-3.300v9.600l-5,-3.300z" fill="#fff"/>
<!-- camtasia -->
<path d="M1193,1040h24.400v23l-7,7h-23.700v-23.500z" fill="#1aa3e6"/>
<path d="M1210.500,1050a7.500,7.500 0 1 0 0,10" fill="none" stroke="#fff" stroke-width="4.500"/>
<!-- flash diamond -->
<path d="M1263.700,1041l14.300,14l-14.300,14l-14.300,-14z" fill="#0b0b0d"/>
<path d="M1266,1044l9,10h-7l2,10l-4,5l1,-11h-7l6,-14z" fill="#3b8fe8"/><path d="M1266,1044l-6,14h7l-1,11" fill="none" stroke="#8cc4ff" stroke-width=".8"/>
<!-- skype -->
<circle cx="1325.600" cy="1055" r="13.500" fill="#0c9be8"/><circle cx="1318" cy="1047" r="6.500" fill="#0c9be8"/><circle cx="1333" cy="1063" r="6.500" fill="#0c9be8"/>
<text x="1325.600" y="1062.500" font-size="21" fill="#fff" text-anchor="middle" font-weight="bold">S</text>
<!-- weather -->
<path d="M1431,1043.500a11.500,11.500 0 1 0 10,16a9.500,9.500 0 0 1 -10,-16z" fill="#fdd400"/>
<path d="M1418.500,1050.500a3,3 0 0 1 2.500,-4.500a4,4 0 0 1 7.500,1a2.500,2.500 0 0 1 0,5h-8a2.500,2.500 0 0 1 -2,-1.500z" fill="#a6cff2"/>
<text x="1455" y="1062.700" font-size="18" fill="#fff" letter-spacing="-.9">25°C</text>
<!-- tray -->
<path d="M1514,1059.500l8,-8l8,8" stroke="#fff" stroke-width="1.500" fill="none"/>
<g fill="none" stroke="#fff" stroke-width="1.200"><rect x="1546" y="1050.500" width="8.500" height="9.500" rx="1.500"/><path d="M1555,1054l4,-2.500v8l-4,-2.500M1547,1048a6,3 0 0 1 9,0M1547,1062.500a6,3 0 0 0 9,0"/></g>
<path d="M1576,1061a4,4 0 0 1 .5,-8a5.500,5.500 0 0 1 10.300,-1a4.500,4.500 0 0 1 1.700,9z" fill="#e9e9e9"/><path d="M1580,1061a4,4 0 0 1 2,-6l8,3a3,3 0 0 1 -1.500,3z" fill="#bdbdbd"/>
<g fill="none" stroke="#fff" stroke-width="1.200"><rect x="1607" y="1050" width="14" height="10.500"/><path d="M1621.500,1053v4.500M1603,1050.500v-3.500M1606,1050.500v-3.500M1602,1050.500h5.500v3a2.700,2.700 0 0 1 -5.500,0zM1604.500,1056.500v3h2.500"/></g><rect x="1608.500" y="1051.500" width="6" height="7.500" fill="#fff"/>
<g fill="none" stroke="#fff" stroke-width="1.300"><path d="M1635,1062a15,15 0 0 1 15,-15M1639.500,1062a10.500,10.500 0 0 1 10.500,-10.500M1644,1062a6,6 0 0 1 6,-6"/></g><circle cx="1649" cy="1061.500" r="1.500" fill="#fff"/>
<g fill="none" stroke="#fff" stroke-width="1.200"><path d="M1662.500,1052.500h3.500l4.500,-4.500v14l-4.500,-4.500h-3.500z"/><path d="M1673.500,1051.500a5,5 0 0 1 0,7M1676.500,1049a9,9 0 0 1 0,12M1679.500,1047a12,12 0 0 1 0,16"/></g>
<path d="M1698,1046.500l4,2.500l-4,2.500l-4,-2.500zM1706,1046.500l4,2.500l-4,2.500l-4,-2.500zM1702,1049l4,2.500l-4,2.500l-4,-2.500zM1706,1051.500l4,2.500l-4,2.500l-4,-2.500zM1702,1057l4,2.500l-4,2.500l-3,-2z" fill="#fff"/>
<rect x="1692" y="1053" width="10.500" height="10.500" rx="1.500" fill="#e0102b"/><text x="1697.200" y="1062" font-size="9.500" fill="#fff" text-anchor="middle" font-weight="bold">4</text>
<text x="1725.500" y="1061" font-size="15" fill="#fff" letter-spacing="-.4">ENG</text>
<text x="1807" y="1049" font-size="15" fill="#fff" text-anchor="middle" letter-spacing="-.4">21:47</text>
<text x="1808" y="1072" font-size="15" fill="#fff" text-anchor="middle" letter-spacing="-.1">17/08/2021</text>
<!-- notifications -->
<path d="M1869.500,1045h19.500v14h-14l-5.500,4z" fill="#fff"/><path d="M1872.500,1049h13.500M1872.500,1052.500h13.500M1872.500,1056h9" stroke="#2a2321" stroke-width="1"/>
<circle cx="1888.400" cy="1064.600" r="10.300" fill="#2b2b2b" stroke="#e8e8e8" stroke-width="1.200"/>
<text x="1888.400" y="1069.400" font-size="13.500" fill="#fff" text-anchor="middle" font-weight="bold" letter-spacing="-.6">10</text>
<path d="M1915.500,1030V1080" stroke="#6a625e" stroke-width="1"/>
</svg>

</div>
</body>
</html>
